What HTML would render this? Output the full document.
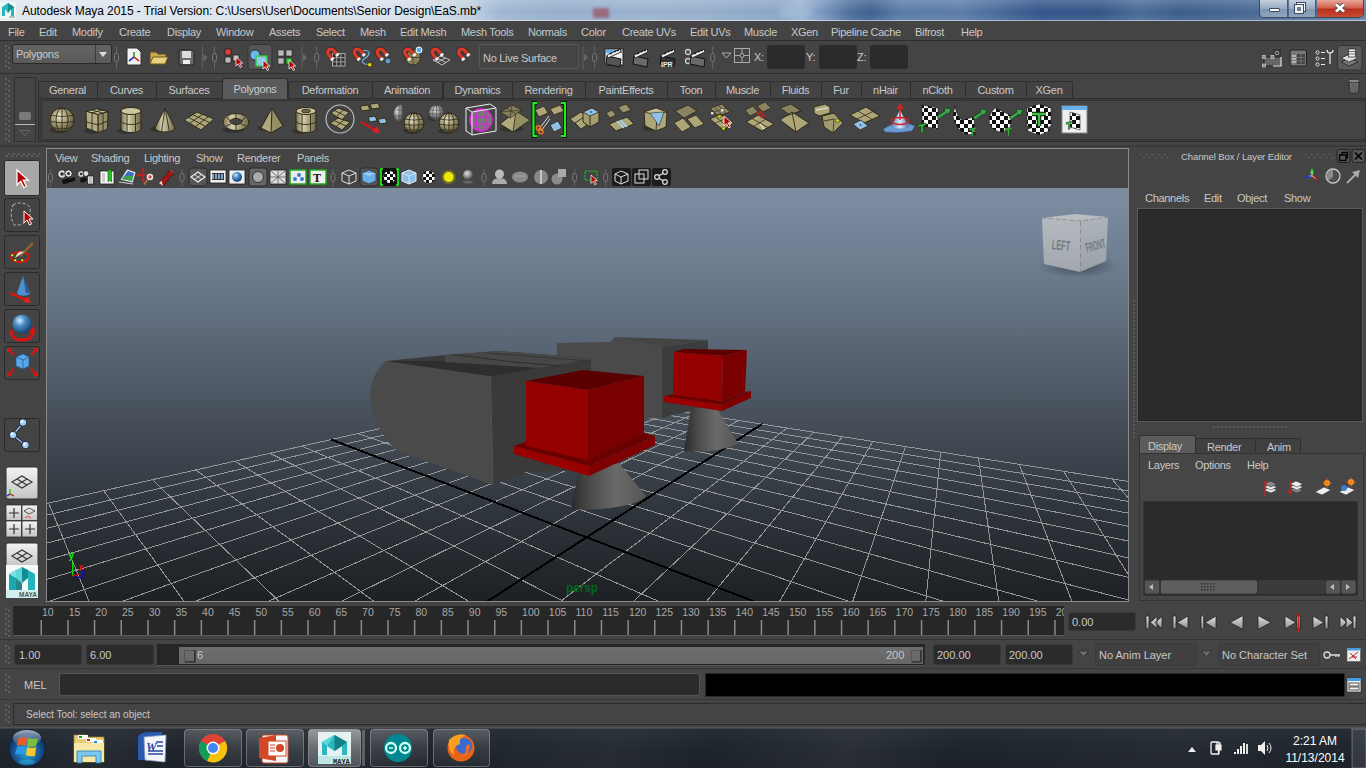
<!DOCTYPE html><html><head><meta charset="utf-8"><style>
*{margin:0;padding:0;box-sizing:border-box}
html,body{width:1366px;height:768px;overflow:hidden;background:#444;font-family:"Liberation Sans",sans-serif;font-size:10.5px;color:#c8c8c8}
.t{position:absolute;white-space:pre;line-height:12px;letter-spacing:-0.3px}
.a{position:absolute}
</style></head><body>
<div class="a" style="left:0;top:0;width:1366px;height:21px;background:linear-gradient(90deg,#dfe7ee 0px,#d8e2eb 380px,#d2dde8 430px,#c0d0e0 470px,#9fb7d3 500px,#95aecc 560px,#9ab2cf 650px,#94adcb 720px,#8aa5c4 780px,#98b2cf 800px,#7d9ac0 820px,#4d6f9c 850px,#3f6190 870px,#5a7ba6 900px,#5c7ca7 960px,#48699a 1000px,#33558a 1040px,#355688 1100px,#4a6b96 1140px,#3c5d8a 1180px,#4a6a94 1260px,#6282aa 1366px)"></div>
<div class="a" style="left:0;top:0;width:1366px;height:20px;background:linear-gradient(180deg,rgba(255,255,255,0.18),rgba(255,255,255,0) 60%,rgba(255,255,255,0.08))"></div>
<div class="a" style="left:0;top:20px;width:1366px;height:1px;background:rgba(255,255,255,0.55)"></div>
<div class="a" style="left:593px;top:8px;width:16px;height:10px;background:#9a5a6a;filter:blur(1.5px);opacity:0.8"></div>
<div class="a" style="left:780px;top:6px;width:30px;height:11px;background:#a8c0da;filter:blur(3px);opacity:0.7"></div>
<svg class="a" style="left:0;top:2px" width="16" height="17"><rect x="0" y="0" width="16" height="17" fill="#eef6f6"/><path d="M2,14 L2,5 L8,1 L14,5 L14,14 L11,14 L11,7 L8,11 L5,7 L5,14 Z" fill="#2ab5bc"/><path d="M8,1 L8,11 L11,7 L14,5 Z" fill="#178a92"/><rect x="9" y="14" width="6" height="2" fill="#bbb"/></svg>
<div class="t" style="left:22px;top:4px;font-size:12px;color:#000;line-height:14px;letter-spacing:-0.07px">Autodesk Maya 2015 - Trial Version: C:\Users\User\Documents\Senior Design\EaS.mb*</div>
<div class="a" style="left:1259px;top:0;width:105px;height:18px;border:1px solid #3c4a5c;border-top:none;border-radius:0 0 5px 5px;background:rgba(0,0,0,0.1)"></div>
<div style="position:absolute;left:1260px;top:0px;width:28px;height:17px;background:linear-gradient(#c4d0de,#97aac0 50%,#7e95b0 51%,#8fa6c0);border-right:1px solid #4a5a70;border-radius:0 0 0 4px"></div>
<div style="position:absolute;left:1269px;top:8px;width:11px;height:4px;background:#fff;border:1px solid #3a4a5e;border-radius:1px"></div>
<div style="position:absolute;left:1289px;top:0px;width:27px;height:17px;background:linear-gradient(#c4d0de,#97aac0 50%,#7e95b0 51%,#8fa6c0);border-right:1px solid #4a5a70"></div>
<div style="position:absolute;left:1297px;top:3px;width:8px;height:8px;border:2px solid #fff;box-shadow:0 0 0 1px #3a4a5e"></div>
<div style="position:absolute;left:1295px;top:5px;width:8px;height:8px;border:2.5px solid #f4f4f4;background:#6a8098;box-shadow:0 0 0 1px #3a4a5e"></div>
<div style="position:absolute;left:1317px;top:0px;width:46px;height:17px;background:linear-gradient(#e8a898,#d06050 45%,#b83020 55%,#c84a30);border-radius:0 0 4px 0"></div>
<svg class="a" style="left:1317px;top:0" width="46" height="17"><path d="M19,4.5 L27,11.5 M27,4.5 L19,11.5" stroke="#4a4a4a" stroke-width="4.6"/><path d="M19,4.5 L27,11.5 M27,4.5 L19,11.5" stroke="#fff" stroke-width="2.8"/></svg>
<div style="position:absolute;left:0px;top:21px;width:1366px;height:20px;background:#444;border-bottom:1px solid #2e2e2e"></div>
<div class="t" style="left:8px;top:26px;font-size:11px">File</div>
<div class="t" style="left:39px;top:26px;font-size:11px">Edit</div>
<div class="t" style="left:72px;top:26px;font-size:11px">Modify</div>
<div class="t" style="left:119px;top:26px;font-size:11px">Create</div>
<div class="t" style="left:167px;top:26px;font-size:11px">Display</div>
<div class="t" style="left:216px;top:26px;font-size:11px">Window</div>
<div class="t" style="left:269px;top:26px;font-size:11px">Assets</div>
<div class="t" style="left:316px;top:26px;font-size:11px">Select</div>
<div class="t" style="left:360px;top:26px;font-size:11px">Mesh</div>
<div class="t" style="left:400px;top:26px;font-size:11px">Edit Mesh</div>
<div class="t" style="left:461px;top:26px;font-size:11px">Mesh Tools</div>
<div class="t" style="left:528px;top:26px;font-size:11px">Normals</div>
<div class="t" style="left:581px;top:26px;font-size:11px">Color</div>
<div class="t" style="left:622px;top:26px;font-size:11px">Create UVs</div>
<div class="t" style="left:690px;top:26px;font-size:11px">Edit UVs</div>
<div class="t" style="left:744px;top:26px;font-size:11px">Muscle</div>
<div class="t" style="left:791px;top:26px;font-size:11px">XGen</div>
<div class="t" style="left:831px;top:26px;font-size:11px">Pipeline Cache</div>
<div class="t" style="left:915px;top:26px;font-size:11px">Bifrost</div>
<div class="t" style="left:961px;top:26px;font-size:11px">Help</div>
<div style="position:absolute;left:0px;top:41px;width:1366px;height:33px;background:#444;border-bottom:1px solid #2e2e2e"></div>
<div style="position:absolute;left:12px;top:44px;width:100px;height:20px;background:linear-gradient(#636363,#5a5a5a);border:1px solid #2a2a2a;border-radius:3px"></div>
<div class="t" style="left:16px;top:48px;font-size:11px">Polygons</div>
<div style="position:absolute;left:95px;top:45px;width:1px;height:18px;background:#3c3c3c"></div>
<div class="a" style="left:99px;top:52px;width:0;height:0;border-left:4px solid transparent;border-right:4px solid transparent;border-top:5px solid #ddd"></div>
<div style="position:absolute;left:479px;top:44px;width:100px;height:25px;background:#444;border:1px solid #585858;border-radius:3px"></div>
<div class="t" style="left:483px;top:52px;font-size:11px">No Live Surface</div>
<div class="t" style="left:754px;top:51px;font-size:11px">X:</div>
<div style="position:absolute;left:767px;top:45px;width:38px;height:24px;background:#2b2b2b;border-radius:3px"></div>
<div class="t" style="left:806px;top:51px;font-size:11px">Y:</div>
<div style="position:absolute;left:819px;top:45px;width:38px;height:24px;background:#2b2b2b;border-radius:3px"></div>
<div class="t" style="left:857px;top:51px;font-size:11px">Z:</div>
<div style="position:absolute;left:870px;top:45px;width:38px;height:24px;background:#2b2b2b;border-radius:3px"></div>
<div style="position:absolute;left:14px;top:77px;width:22px;height:65px;border:1px solid #2f2f2f;background:#444"></div>
<div style="position:absolute;left:19px;top:112px;width:12px;height:8px;background:#7a7a7a;border-radius:2px"></div>
<div style="position:absolute;left:15px;top:124px;width:20px;height:1px;background:#bbb"></div>
<div class="a" style="left:19px;top:130px;width:0;height:0;border-left:6px solid transparent;border-right:6px solid transparent;border-top:6px solid #666"></div>
<div class="a" style="left:21px;top:131px;width:0;height:0;border-left:4px solid transparent;border-right:4px solid transparent;border-top:4px solid #444"></div>
<div style="position:absolute;left:38px;top:98px;width:1328px;height:44px;background:#3c3c3c;border:1px solid #2e2e2e;border-right:none"></div>
<div style="position:absolute;left:41px;top:100px;width:1325px;height:40px;background:#444;border:1px solid #333;border-radius:2px"></div>
<div style="position:absolute;left:38px;top:81px;width:60px;height:17px;background:#434343;border:1px solid #2e2e2e;border-bottom:none;border-radius:2px 2px 0 0"></div>
<div class="t" style="left:38px;top:84px;width:59px;text-align:center;font-size:11px">General</div>
<div style="position:absolute;left:97px;top:81px;width:60px;height:17px;background:#434343;border:1px solid #2e2e2e;border-bottom:none;border-radius:2px 2px 0 0"></div>
<div class="t" style="left:97px;top:84px;width:59px;text-align:center;font-size:11px">Curves</div>
<div style="position:absolute;left:156px;top:81px;width:67px;height:17px;background:#434343;border:1px solid #2e2e2e;border-bottom:none;border-radius:2px 2px 0 0"></div>
<div class="t" style="left:156px;top:84px;width:66px;text-align:center;font-size:11px">Surfaces</div>
<div style="position:absolute;left:222px;top:78px;width:66px;height:21px;background:#5a5a5a;border:1px solid #2e2e2e;border-bottom:none;border-radius:3px 3px 0 0"></div>
<div class="t" style="left:222px;top:83px;width:66px;text-align:center;font-size:11px;color:#ccc">Polygons</div>
<div style="position:absolute;left:288px;top:81px;width:85px;height:17px;background:#434343;border:1px solid #2e2e2e;border-bottom:none;border-radius:2px 2px 0 0"></div>
<div class="t" style="left:288px;top:84px;width:84px;text-align:center;font-size:11px">Deformation</div>
<div style="position:absolute;left:372px;top:81px;width:71px;height:17px;background:#434343;border:1px solid #2e2e2e;border-bottom:none;border-radius:2px 2px 0 0"></div>
<div class="t" style="left:372px;top:84px;width:70px;text-align:center;font-size:11px">Animation</div>
<div style="position:absolute;left:443px;top:81px;width:70px;height:17px;background:#434343;border:1px solid #2e2e2e;border-bottom:none;border-radius:2px 2px 0 0"></div>
<div class="t" style="left:443px;top:84px;width:69px;text-align:center;font-size:11px">Dynamics</div>
<div style="position:absolute;left:512px;top:81px;width:74px;height:17px;background:#434343;border:1px solid #2e2e2e;border-bottom:none;border-radius:2px 2px 0 0"></div>
<div class="t" style="left:512px;top:84px;width:73px;text-align:center;font-size:11px">Rendering</div>
<div style="position:absolute;left:585px;top:81px;width:83px;height:17px;background:#434343;border:1px solid #2e2e2e;border-bottom:none;border-radius:2px 2px 0 0"></div>
<div class="t" style="left:585px;top:84px;width:82px;text-align:center;font-size:11px">PaintEffects</div>
<div style="position:absolute;left:667px;top:81px;width:49px;height:17px;background:#434343;border:1px solid #2e2e2e;border-bottom:none;border-radius:2px 2px 0 0"></div>
<div class="t" style="left:667px;top:84px;width:48px;text-align:center;font-size:11px">Toon</div>
<div style="position:absolute;left:715px;top:81px;width:56px;height:17px;background:#434343;border:1px solid #2e2e2e;border-bottom:none;border-radius:2px 2px 0 0"></div>
<div class="t" style="left:715px;top:84px;width:55px;text-align:center;font-size:11px">Muscle</div>
<div style="position:absolute;left:770px;top:81px;width:52px;height:17px;background:#434343;border:1px solid #2e2e2e;border-bottom:none;border-radius:2px 2px 0 0"></div>
<div class="t" style="left:770px;top:84px;width:51px;text-align:center;font-size:11px">Fluids</div>
<div style="position:absolute;left:821px;top:81px;width:41px;height:17px;background:#434343;border:1px solid #2e2e2e;border-bottom:none;border-radius:2px 2px 0 0"></div>
<div class="t" style="left:821px;top:84px;width:40px;text-align:center;font-size:11px">Fur</div>
<div style="position:absolute;left:861px;top:81px;width:50px;height:17px;background:#434343;border:1px solid #2e2e2e;border-bottom:none;border-radius:2px 2px 0 0"></div>
<div class="t" style="left:861px;top:84px;width:49px;text-align:center;font-size:11px">nHair</div>
<div style="position:absolute;left:910px;top:81px;width:56px;height:17px;background:#434343;border:1px solid #2e2e2e;border-bottom:none;border-radius:2px 2px 0 0"></div>
<div class="t" style="left:910px;top:84px;width:55px;text-align:center;font-size:11px">nCloth</div>
<div style="position:absolute;left:965px;top:81px;width:62px;height:17px;background:#434343;border:1px solid #2e2e2e;border-bottom:none;border-radius:2px 2px 0 0"></div>
<div class="t" style="left:965px;top:84px;width:61px;text-align:center;font-size:11px">Custom</div>
<div style="position:absolute;left:1026px;top:81px;width:47px;height:17px;background:#434343;border:1px solid #2e2e2e;border-bottom:none;border-radius:2px 2px 0 0"></div>
<div class="t" style="left:1026px;top:84px;width:46px;text-align:center;font-size:11px">XGen</div>
<div style="position:absolute;left:0px;top:145px;width:1366px;height:2px;background:#393939"></div>
<div style="position:absolute;left:46px;top:148px;width:1083px;height:454px;background:#444;border:1px solid #8a8a8a"></div>
<div class="t" style="left:55px;top:152px;font-size:11px">View</div>
<div class="t" style="left:91px;top:152px;font-size:11px">Shading</div>
<div class="t" style="left:144px;top:152px;font-size:11px">Lighting</div>
<div class="t" style="left:196px;top:152px;font-size:11px">Show</div>
<div class="t" style="left:237px;top:152px;font-size:11px">Renderer</div>
<div class="t" style="left:297px;top:152px;font-size:11px">Panels</div>
<div class="a" style="left:47px;top:188px;width:1081px;height:413px;background:linear-gradient(180deg,#7d8ea3 0%,#6e7d90 18%,#5a6675 38%,#444d57 58%,#2f353c 78%,#1d2024 100%);overflow:hidden">
<svg width="1081" height="413" style="position:absolute;left:0;top:0"><g transform="translate(-47,-188)"><line x1="548.5" y1="390.7" x2="-384.2" y2="600.3" stroke="#969696" stroke-width="1" shape-rendering="crispEdges"/><line x1="548.5" y1="390.7" x2="1222.1" y2="496.1" stroke="#969696" stroke-width="1" shape-rendering="crispEdges"/><line x1="561.8" y1="392.7" x2="-411.8" y2="624.2" stroke="#969696" stroke-width="1" shape-rendering="crispEdges"/><line x1="536.3" y1="393.4" x2="1239.8" y2="509.3" stroke="#969696" stroke-width="1" shape-rendering="crispEdges"/><line x1="575.8" y1="394.9" x2="-444.2" y2="652.1" stroke="#969696" stroke-width="1" shape-rendering="crispEdges"/><line x1="523.4" y1="396.3" x2="1260.1" y2="524.3" stroke="#969696" stroke-width="1" shape-rendering="crispEdges"/><line x1="590.4" y1="397.2" x2="-482.7" y2="685.3" stroke="#969696" stroke-width="1" shape-rendering="crispEdges"/><line x1="509.7" y1="399.4" x2="1283.5" y2="541.6" stroke="#969696" stroke-width="1" shape-rendering="crispEdges"/><line x1="605.7" y1="399.6" x2="-529.2" y2="725.5" stroke="#969696" stroke-width="1" shape-rendering="crispEdges"/><line x1="495.0" y1="402.7" x2="1310.8" y2="561.8" stroke="#969696" stroke-width="1" shape-rendering="crispEdges"/><line x1="621.8" y1="402.1" x2="-586.5" y2="774.9" stroke="#969696" stroke-width="1" shape-rendering="crispEdges"/><line x1="479.4" y1="406.2" x2="1343.0" y2="585.6" stroke="#969696" stroke-width="1" shape-rendering="crispEdges"/><line x1="638.8" y1="404.8" x2="-658.8" y2="837.4" stroke="#969696" stroke-width="1" shape-rendering="crispEdges"/><line x1="462.7" y1="409.9" x2="1381.7" y2="614.2" stroke="#969696" stroke-width="1" shape-rendering="crispEdges"/><line x1="656.6" y1="407.6" x2="-753.0" y2="918.7" stroke="#969696" stroke-width="1" shape-rendering="crispEdges"/><line x1="444.7" y1="414.0" x2="1429.0" y2="649.2" stroke="#969696" stroke-width="1" shape-rendering="crispEdges"/><line x1="675.4" y1="410.5" x2="-880.7" y2="1028.9" stroke="#969696" stroke-width="1" shape-rendering="crispEdges"/><line x1="425.4" y1="418.3" x2="1488.0" y2="692.9" stroke="#969696" stroke-width="1" shape-rendering="crispEdges"/><line x1="695.3" y1="413.6" x2="-1063.6" y2="1186.9" stroke="#969696" stroke-width="1" shape-rendering="crispEdges"/><line x1="404.6" y1="423.0" x2="1563.9" y2="749.1" stroke="#969696" stroke-width="1" shape-rendering="crispEdges"/><line x1="716.2" y1="416.9" x2="-1347.7" y2="1432.1" stroke="#969696" stroke-width="1" shape-rendering="crispEdges"/><line x1="382.1" y1="428.1" x2="1665.1" y2="823.9" stroke="#969696" stroke-width="1" shape-rendering="crispEdges"/><line x1="738.5" y1="420.4" x2="-1848.7" y2="1864.6" stroke="#969696" stroke-width="1" shape-rendering="crispEdges"/><line x1="357.7" y1="433.5" x2="1806.7" y2="928.7" stroke="#969696" stroke-width="1" shape-rendering="crispEdges"/><line x1="787.2" y1="428.0" x2="-7702.8" y2="6918.3" stroke="#969696" stroke-width="1" shape-rendering="crispEdges"/><line x1="302.0" y1="446.1" x2="2371.8" y2="1346.8" stroke="#969696" stroke-width="1" shape-rendering="crispEdges"/><line x1="813.9" y1="432.2" x2="-11746.4" y2="12210.5" stroke="#969696" stroke-width="1" shape-rendering="crispEdges"/><line x1="270.0" y1="453.2" x2="3075.9" y2="1867.8" stroke="#969696" stroke-width="1" shape-rendering="crispEdges"/><line x1="842.4" y1="436.7" x2="-8866.8" y2="12210.2" stroke="#969696" stroke-width="1" shape-rendering="crispEdges"/><line x1="234.8" y1="461.2" x2="5172.9" y2="3419.4" stroke="#969696" stroke-width="1" shape-rendering="crispEdges"/><line x1="872.8" y1="441.4" x2="-5987.2" y2="12209.8" stroke="#969696" stroke-width="1" shape-rendering="crispEdges"/><line x1="195.8" y1="469.9" x2="16099.6" y2="12207.1" stroke="#969696" stroke-width="1" shape-rendering="crispEdges"/><line x1="905.5" y1="446.6" x2="-3107.6" y2="12209.5" stroke="#969696" stroke-width="1" shape-rendering="crispEdges"/><line x1="152.4" y1="479.7" x2="12357.9" y2="12207.6" stroke="#969696" stroke-width="1" shape-rendering="crispEdges"/><line x1="940.6" y1="452.1" x2="-228.0" y2="12209.1" stroke="#969696" stroke-width="1" shape-rendering="crispEdges"/><line x1="103.6" y1="490.6" x2="8616.3" y2="12208.0" stroke="#969696" stroke-width="1" shape-rendering="crispEdges"/><line x1="978.4" y1="458.0" x2="2651.6" y2="12208.8" stroke="#969696" stroke-width="1" shape-rendering="crispEdges"/><line x1="48.6" y1="503.0" x2="4874.7" y2="12208.5" stroke="#969696" stroke-width="1" shape-rendering="crispEdges"/><line x1="1019.3" y1="464.4" x2="5531.2" y2="12208.4" stroke="#969696" stroke-width="1" shape-rendering="crispEdges"/><line x1="-14.1" y1="517.1" x2="1133.1" y2="12208.9" stroke="#969696" stroke-width="1" shape-rendering="crispEdges"/><line x1="1063.6" y1="471.3" x2="8410.7" y2="12208.1" stroke="#969696" stroke-width="1" shape-rendering="crispEdges"/><line x1="-86.0" y1="533.3" x2="-2608.5" y2="12209.4" stroke="#969696" stroke-width="1" shape-rendering="crispEdges"/><line x1="1111.8" y1="478.9" x2="11290.3" y2="12207.7" stroke="#969696" stroke-width="1" shape-rendering="crispEdges"/><line x1="-169.5" y1="552.0" x2="-6350.1" y2="12209.9" stroke="#969696" stroke-width="1" shape-rendering="crispEdges"/><line x1="1164.4" y1="487.1" x2="14169.9" y2="12207.3" stroke="#969696" stroke-width="1" shape-rendering="crispEdges"/><line x1="-267.5" y1="574.1" x2="-10091.7" y2="12210.3" stroke="#969696" stroke-width="1" shape-rendering="crispEdges"/><line x1="1222.1" y1="496.1" x2="17049.5" y2="12207.0" stroke="#969696" stroke-width="1" shape-rendering="crispEdges"/><line x1="-384.2" y1="600.3" x2="-13833.4" y2="12210.8" stroke="#969696" stroke-width="1" shape-rendering="crispEdges"/><line x1="762.1" y1="424.1" x2="-2968.3" y2="2831.1" stroke="#000" stroke-width="2" shape-rendering="crispEdges"/><line x1="331.1" y1="439.5" x2="2018.8" y2="1085.6" stroke="#000" stroke-width="2" shape-rendering="crispEdges"/><defs>
<linearGradient id="cone" x1="0" x2="1" y1="0" y2="0"><stop offset="0" stop-color="#2a2a2a"/><stop offset="0.25" stop-color="#4a4a4a"/><stop offset="0.6" stop-color="#6a6a6a"/><stop offset="1" stop-color="#555"/></linearGradient>
<radialGradient id="vcs" cx="0.5" cy="0.5" r="0.5"><stop offset="0" stop-color="#2c3846" stop-opacity="0.7"/><stop offset="1" stop-color="#2c3846" stop-opacity="0"/></radialGradient>
<linearGradient id="vcl" x1="0" x2="0" y1="0" y2="1"><stop offset="0" stop-color="#b4b9bf"/><stop offset="1" stop-color="#a2a8ae"/></linearGradient>
<linearGradient id="vcr" x1="0" x2="0" y1="0" y2="1"><stop offset="0" stop-color="#adb3b9"/><stop offset="1" stop-color="#9aa1a8"/></linearGradient>
</defs><polygon points="557,343 610,342 615,337 662,347 662,418 597,421 557,421" fill="#4a4a4a" /><polygon points="662,347 708,340 708,406 662,418" fill="#3c3c3c" /><polygon points="615,337 708,340 662,347" fill="#444" /><polygon points="386,361 445,355 486,352 497,351 591,358 591,470 526,472 493,485 397,451" fill="#3a3a3a" /><path d="M386,361 L490,376 L493,485 L397,451 C385,440 372,420 370,398 C370,385 374,372 386,361 Z" fill="#4a4a4a"/><polygon points="490,376 591,360 591,470 526,472 493,485" fill="#3a3a3a" /><polygon points="386,361 445,361 541,368 591,359 490,376" fill="#2e2e2e" /><polygon points="445,355 486,352 497,351 591,358 591,359 541,368 445,362" fill="#474747" /><line x1="490.5" y1="376" x2="493" y2="485" stroke="#555" stroke-width="1"/><polyline points="453,354.6 482,358 510,361.7 545,364.6 560,366" fill="none" stroke="#2e2e2e" stroke-width="1"/><polyline points="486,353 540,357 590,361" fill="none" stroke="#353535" stroke-width="1"/><path d="M578,474 L619,463 L646,496 C640,505 600,512 571,509 Z" fill="url(#cone)"/><polygon points="514,446 526,442 588,457 644,433 655,436 589,466" fill="#6a0000" /><polygon points="514,446 589,466 589,476 514,454" fill="#9a0000" /><polygon points="589,466 655,436 655,445 589,476" fill="#7e0000" /><polygon points="526,381 583,370 644,376 588,390" fill="#5a0000" /><polygon points="526,381 588,390 588,460 526,446" fill="#950000" /><polygon points="588,390 644,376 644,433 588,460" fill="#780000" /><path d="M691,408 L716,407 L738,443 C730,450 700,453 684,451 Z" fill="url(#cone)"/><polygon points="664,396 674,394 722,401 745,392 751,391 722,405" fill="#6a0000" /><polygon points="664,396 722,405 722,411 664,402" fill="#9a0000" /><polygon points="722,405 751,391 751,398 722,411" fill="#7e0000" /><polygon points="674,352 683,349 747,350 723,356" fill="#5a0000" /><polygon points="674,352 723,356 722,401 673,395" fill="#950000" /><polygon points="723,356 747,350 745,392 722,401" fill="#780000" /><ellipse cx="1078" cy="266" rx="40" ry="12" fill="url(#vcs)"/><polygon points="1042,218 1080,221 1080,272 1044,264" fill="url(#vcl)" /><polygon points="1080,221 1108,217 1106,261 1080,272" fill="url(#vcr)" /><polygon points="1042,218 1075,214 1108,217 1080,221" fill="#b8bdc2" /><line x1="1080.5" y1="221" x2="1080.5" y2="272" stroke="#8a8580" stroke-width="0.8" stroke-dasharray="5,3"/><polyline points="1042,218 1080,221 1108,217" fill="none" stroke="#8a8580" stroke-width="0.8" stroke-dasharray="4,3"/><text x="1052" y="250" font-family="Liberation Sans" font-size="14" font-weight="bold" fill="#737a82" textLength="18" lengthAdjust="spacingAndGlyphs" transform="rotate(5 1061 245)">LEFT</text><text x="1085" y="251" font-family="Liberation Sans" font-size="13" font-weight="bold" fill="#737a82" textLength="20" lengthAdjust="spacingAndGlyphs" transform="translate(0,-1) rotate(-14 1095 245)">FRONT</text><rect x="72" y="562" width="1.2" height="14" fill="#00e000"/><path d="M72,576 L76,575 L80,574" stroke="#f00" stroke-width="1.2" fill="none"/><path d="M75,577 L84,578" stroke="#00f" stroke-width="1.2" fill="none"/><text x="68.5" y="559" font-family="Liberation Sans" font-size="10" font-weight="bold" fill="#00f000">y</text><text x="78.5" y="570" font-family="Liberation Sans" font-size="8.5" font-weight="bold" fill="#f00">x</text><text x="81" y="575" font-family="Liberation Sans" font-size="8" font-weight="bold" fill="#00f">z</text><text x="566" y="592" font-family="Liberation Sans" font-size="12" font-weight="bold" fill="#00661a" textLength="32" lengthAdjust="spacingAndGlyphs">persp</text></g></svg>
</div>
<div style="position:absolute;left:1133px;top:147px;width:233px;height:456px;background:#444"></div>
<div class="t" style="left:1181px;top:151px;font-size:9.5px;letter-spacing:-0.1px">Channel Box / Layer Editor</div>
<div class="t" style="left:1145px;top:192px;font-size:11px">Channels</div>
<div class="t" style="left:1204px;top:192px;font-size:11px">Edit</div>
<div class="t" style="left:1237px;top:192px;font-size:11px">Object</div>
<div class="t" style="left:1284px;top:192px;font-size:11px">Show</div>
<div style="position:absolute;left:1137px;top:208px;width:226px;height:214px;background:#2b2b2b;border:1px solid #5a5a5a;box-shadow:inset 0 0 0 1px #222"></div>
<div style="position:absolute;left:1139px;top:435px;width:57px;height:19px;background:#5c5c5c;border:1px solid #333;border-bottom:none;border-radius:3px 3px 0 0"></div>
<div class="t" style="left:1148px;top:440px;font-size:11px">Display</div>
<div style="position:absolute;left:1195px;top:438px;width:61px;height:16px;background:#404040;border:1px solid #2e2e2e;border-bottom:none;border-radius:3px 3px 0 0"></div>
<div class="t" style="left:1207px;top:441px;font-size:11px">Render</div>
<div style="position:absolute;left:1255px;top:438px;width:46px;height:16px;background:#404040;border:1px solid #2e2e2e;border-bottom:none;border-radius:3px 3px 0 0"></div>
<div class="t" style="left:1267px;top:441px;font-size:11px">Anim</div>
<div style="position:absolute;left:1139px;top:453px;width:225px;height:148px;background:#464646;border:1px solid #333"></div>
<div class="t" style="left:1148px;top:459px;font-size:11px">Layers</div>
<div class="t" style="left:1195px;top:459px;font-size:11px">Options</div>
<div class="t" style="left:1247px;top:459px;font-size:11px">Help</div>
<div style="position:absolute;left:1143px;top:501px;width:215px;height:95px;background:#2b2b2b;border:1px solid #333;border-radius:2px"></div>
<div style="position:absolute;left:0px;top:603px;width:1366px;height:37px;background:#444;border-bottom:1px solid #333"></div>
<div style="position:absolute;left:13px;top:606px;width:1051px;height:30px;background:#272727;border-bottom:1px solid #5a5a5a"></div>
<div style="position:absolute;left:1068px;top:612px;width:68px;height:19px;background:#2b2b2b;border:1px solid #393939;border-radius:3px"></div>
<div class="t" style="left:1072px;top:616px;font-size:11px;letter-spacing:0">0.00</div>
<div style="position:absolute;left:0px;top:641px;width:1366px;height:28px;background:#444;border-bottom:1px solid #383838"></div>
<div style="position:absolute;left:14px;top:644px;width:68px;height:21px;background:#2b2b2b;border:1px solid #383838;border-radius:3px"></div>
<div class="t" style="left:19px;top:649px;font-size:11px;letter-spacing:0">1.00</div>
<div style="position:absolute;left:86px;top:644px;width:68px;height:21px;background:#2b2b2b;border:1px solid #383838;border-radius:3px"></div>
<div class="t" style="left:90px;top:649px;font-size:11px;letter-spacing:0">6.00</div>
<div style="position:absolute;left:157px;top:644px;width:768px;height:22px;background:#262626;border-bottom:1px solid #555"></div>
<div style="position:absolute;left:179px;top:647px;width:744px;height:18px;background:linear-gradient(#6e6e6e,#666);border-bottom:1px solid #222"></div>
<div class="t" style="left:197px;top:649px;font-size:11px;letter-spacing:0">6</div>
<div class="t" style="left:886px;top:649px;font-size:11px;letter-spacing:0">200</div>
<div style="position:absolute;left:933px;top:644px;width:68px;height:21px;background:#2b2b2b;border:1px solid #383838;border-radius:3px"></div>
<div class="t" style="left:937px;top:649px;font-size:11px;letter-spacing:0">200.00</div>
<div style="position:absolute;left:1005px;top:644px;width:68px;height:21px;background:#2b2b2b;border:1px solid #383838;border-radius:3px"></div>
<div class="t" style="left:1009px;top:649px;font-size:11px;letter-spacing:0">200.00</div>
<div style="position:absolute;left:1095px;top:643px;width:102px;height:23px;background:#404040;border:1px solid #3a3a3a;border-radius:3px"></div>
<div class="t" style="left:1099px;top:649px;font-size:11px;letter-spacing:0">No Anim Layer</div>
<div style="position:absolute;left:1218px;top:643px;width:102px;height:23px;background:#404040;border:1px solid #3a3a3a;border-radius:3px"></div>
<div class="t" style="left:1222px;top:649px;font-size:11px;letter-spacing:0">No Character Set</div>
<div style="position:absolute;left:0px;top:669px;width:1366px;height:31px;background:#444;border-bottom:1px solid #383838"></div>
<div class="t" style="left:24px;top:679px;font-size:11px;letter-spacing:0">MEL</div>
<div style="position:absolute;left:59px;top:673px;width:641px;height:23px;background:#2b2b2b;border:1px solid #555;border-radius:3px"></div>
<div style="position:absolute;left:705px;top:673px;width:640px;height:24px;background:#000;border:1px solid #2a2a2a"></div>
<div style="position:absolute;left:0px;top:700px;width:1366px;height:27px;background:#444"></div>
<div style="position:absolute;left:13px;top:703px;width:1353px;height:22px;background:#444;border:1px solid #2c2c2c;border-right:none"></div>
<div class="t" style="left:26px;top:709px;font-size:10px;letter-spacing:0">Select Tool: select an object</div>
<div class="a" style="left:0;top:727px;width:1366px;height:41px;background:linear-gradient(180deg,#50555a 0px,#50555a 1px,#262c33 2px,#1f252c 50%,#1b2027 100%)"></div>
<div class="a" style="left:0;top:728px;width:1366px;height:40px;background:linear-gradient(115deg,rgba(255,255,255,0) 0%,rgba(255,255,255,0.04) 8%,rgba(255,255,255,0) 14%,rgba(255,255,255,0.05) 25%,rgba(255,255,255,0) 32%,rgba(255,255,255,0.04) 45%,rgba(255,255,255,0) 52%,rgba(255,255,255,0.05) 62%,rgba(255,255,255,0) 70%,rgba(255,255,255,0.03) 85%,rgba(255,255,255,0) 100%)"></div>
<svg width="1366" height="768" style="position:absolute;left:0;top:0"><defs>
<radialGradient id="tsph" cx="0.4" cy="0.35" r="0.65"><stop offset="0" stop-color="#f0ecd8"/><stop offset="0.35" stop-color="#b8b088"/><stop offset="1" stop-color="#5e5838"/></radialGradient>
<linearGradient id="tcyl" x1="0" x2="1"><stop offset="0" stop-color="#7a7250"/><stop offset="0.35" stop-color="#d6d0ac"/><stop offset="1" stop-color="#6e6646"/></linearGradient>
<radialGradient id="bsph" cx="0.38" cy="0.32" r="0.7"><stop offset="0" stop-color="#d8ecff"/><stop offset="0.4" stop-color="#4d8ec8"/><stop offset="1" stop-color="#14406e"/></radialGradient>
<radialGradient id="gsph" cx="0.4" cy="0.35" r="0.7"><stop offset="0" stop-color="#e0e0e0"/><stop offset="0.5" stop-color="#909090"/><stop offset="1" stop-color="#3a3a3a"/></radialGradient>
<linearGradient id="btnw" x1="0" x2="0" y1="0" y2="1"><stop offset="0" stop-color="#f4f4f4"/><stop offset="1" stop-color="#c4c4c4"/></linearGradient>
<linearGradient id="pb" x1="0" x2="0" y1="0" y2="1"><stop offset="0" stop-color="#e4e4e4"/><stop offset="1" stop-color="#8a8a8a"/></linearGradient>
<linearGradient id="mayal" x1="0" x2="0" y1="0" y2="1"><stop offset="0" stop-color="#9ee8ea"/><stop offset="1" stop-color="#1aa5aa"/></linearGradient>
<pattern id="chk" width="8" height="8" patternUnits="userSpaceOnUse"><rect width="8" height="8" fill="#fff"/><rect width="4" height="4" fill="#111"/><rect x="4" y="4" width="4" height="4" fill="#111"/></pattern>
<pattern id="chk6" width="6" height="6" patternUnits="userSpaceOnUse"><rect width="6" height="6" fill="#fff"/><rect width="3" height="3" fill="#111"/><rect x="3" y="3" width="3" height="3" fill="#111"/></pattern>
</defs><ellipse cx="59" cy="130" rx="9.600000000000001" ry="3" fill="#000" opacity="0.25"/><circle cx="62" cy="120" r="12" fill="url(#tsph)" stroke="#2e2a18" stroke-width="1"/><ellipse cx="62" cy="120" rx="6.0" ry="12" fill="none" stroke="#2e2a18" stroke-width="0.9"/><line x1="62" y1="108" x2="62" y2="132" stroke="#2e2a18" stroke-width="0.9"/><path d="M50.96,115.44 Q62,117.6 73.04,115.44 M50,121.44 Q62,124.2 74,121.44 M53.0,127.8 Q62,130.2 71.0,127.8" fill="none" stroke="#2e2a18" stroke-width="0.8"/><ellipse cx="92" cy="130.9" rx="8" ry="3" fill="#000" opacity="0.25"/><path d="M86,111.1 L98.1,114.4 L98.1,132.55 L86.55,128.15 Z" fill="#b3ab82" stroke="#2e2a18" stroke-width="1"/><path d="M98.1,114.4 L108,111.65 L107.45,129.25 L98.1,132.55 Z" fill="#958d65" stroke="#2e2a18" stroke-width="1"/><path d="M86,111.1 L96.45,108.9 L108,111.65 L98.1,114.4 Z" fill="#cfc8a2" stroke="#2e2a18" stroke-width="1"/><path d="M92.05,112.75 L92.05,130.35 M86.33,122.1 L98.1,124.85 L107.67,121 M103.05,113.08 L103.05,130.9 M91.5,110.0 L103.05,113.08 M101.95,110.33 L92.05,112.75" stroke="#2e2a18" stroke-width="0.9" fill="none"/><ellipse cx="125" cy="131" rx="8" ry="3" fill="#000" opacity="0.25"/><path d="M121,111 L121,129 A10,3.5 0 0 0 141,129 L141,111 Z" fill="url(#tcyl)" stroke="#2e2a18" stroke-width="1"/><ellipse cx="131" cy="111" rx="10" ry="3.5" fill="#cdc6a0" stroke="#2e2a18" stroke-width="1"/><path d="M121,121 A10,3.5 0 0 0 141,121 M127.0,114 L127.0,131.5 M135.5,114 L135.5,131.5" stroke="#2e2a18" fill="none" stroke-width="0.9"/><ellipse cx="158" cy="129" rx="8" ry="3" fill="#000" opacity="0.25"/><path d="M165,108 L155,128 A10,4 0 0 0 175,128 Z" fill="url(#tcyl)" stroke="#2e2a18" stroke-width="1"/><path d="M165,108 L161.5,132 M165,108 L169.5,132" stroke="#2e2a18" stroke-width="0.9"/><polygon points="184,120 197,112 214,119 201,130" fill="#aea679" stroke="#2e2a18" stroke-width="1"/><line x1="188.3" y1="117.3" x2="205.3" y2="126.3" stroke="#2e2a18" stroke-width="0.9"/><line x1="189.7" y1="123.3" x2="202.7" y2="114.3" stroke="#2e2a18" stroke-width="0.9"/><line x1="192.7" y1="114.7" x2="209.7" y2="122.7" stroke="#2e2a18" stroke-width="0.9"/><line x1="195.3" y1="126.7" x2="208.3" y2="116.7" stroke="#2e2a18" stroke-width="0.9"/><ellipse cx="233" cy="130" rx="11" ry="3" fill="#000" opacity="0.25"/><ellipse cx="236" cy="122" rx="13" ry="8.5" fill="url(#tcyl)" stroke="#2e2a18" stroke-width="1"/><ellipse cx="236" cy="121.5" rx="6" ry="3" fill="#444" stroke="#2e2a18" stroke-width="1"/><path d="M227,117 L230,121 M236,114 L236,118.5 M245,117 L242,121 M226,126 L231,124 M236,130 L236,124.5 M246,126 L241,124" stroke="#2e2a18" stroke-width="0.9"/><ellipse cx="265" cy="128" rx="8" ry="3" fill="#000" opacity="0.25"/><path d="M272,108 L261,128 L271,133 L283,126 Z" fill="#b1a97d" stroke="#2e2a18" stroke-width="1"/><path d="M272,108 L271,133 L283,126 Z" fill="#948c64" stroke="#2e2a18" stroke-width="1"/><ellipse cx="300" cy="131" rx="8" ry="3" fill="#000" opacity="0.25"/><path d="M296,111 L296,129 A10,3.5 0 0 0 316,129 L316,111 Z" fill="url(#tcyl)" stroke="#2e2a18" stroke-width="1"/><ellipse cx="306" cy="111" rx="10" ry="3.5" fill="#cdc6a0" stroke="#2e2a18" stroke-width="1"/><path d="M296,121 A10,3.5 0 0 0 316,121 M302.0,114 L302.0,131.5 M310.5,114 L310.5,131.5" stroke="#2e2a18" fill="none" stroke-width="0.9"/><ellipse cx="306" cy="111" rx="4.5" ry="1.8" fill="#6d6648" stroke="#2e2a18" stroke-width="0.8"/><circle cx="340" cy="119" r="14" fill="none" stroke="#bbb" stroke-width="1.2"/><polygon points="331,113 338,108 349,112 342,120" fill="#aea679" stroke="#2e2a18" stroke-width="1"/><line x1="334.5" y1="110.5" x2="345.5" y2="116.0" stroke="#2e2a18" stroke-width="0.9"/><line x1="336.5" y1="116.5" x2="343.5" y2="110.0" stroke="#2e2a18" stroke-width="0.9"/><polygon points="330,123 338,118 350,122 342,130" fill="#aea679" stroke="#2e2a18" stroke-width="1"/><line x1="334.0" y1="120.5" x2="346.0" y2="126.0" stroke="#2e2a18" stroke-width="0.9"/><line x1="336.0" y1="126.5" x2="344.0" y2="120.0" stroke="#2e2a18" stroke-width="0.9"/><polygon points="360,106.2 368.0,105 370,109.8 362.0,111" fill="#aea679" stroke="#2e2a18" stroke-width="1"/><polygon points="370,104.2 378.0,103 380,107.8 372.0,109" fill="#aea679" stroke="#2e2a18" stroke-width="1"/><polygon points="368,117.2 375.2,116 377,120.8 369.8,122" fill="#8ec0e8" stroke="#2e2a18" stroke-width="1"/><polygon points="378,119.2 385.2,118 387,122.8 379.8,124" fill="#8ec0e8" stroke="#2e2a18" stroke-width="1"/><line x1="361" y1="122" x2="377" y2="131" stroke="#d01818" stroke-width="2.5"/><polygon points="380,133 372,132 377,126" fill="#e02020"/><path d="M403,104 A9.5,9.5 0 0 0 403,123 Z" fill="url(#gsph)" stroke="#444" stroke-width="0.8"/><path d="M396,110 h7 M394,116 h9 M399,104.5 v18" stroke="#444" stroke-width="0.6"/><ellipse cx="411" cy="131" rx="8.0" ry="3" fill="#000" opacity="0.25"/><circle cx="414" cy="123" r="10" fill="url(#tsph)" stroke="#2e2a18" stroke-width="1"/><ellipse cx="414" cy="123" rx="5.0" ry="10" fill="none" stroke="#2e2a18" stroke-width="0.9"/><line x1="414" y1="113" x2="414" y2="133" stroke="#2e2a18" stroke-width="0.9"/><path d="M404.8,119.2 Q414,121.0 423.2,119.2 M404,124.2 Q414,126.5 424,124.2 M406.5,129.5 Q414,131.5 421.5,129.5" fill="none" stroke="#2e2a18" stroke-width="0.8"/><ellipse cx="433.5" cy="118.0" rx="6.0" ry="3" fill="#000" opacity="0.25"/><circle cx="436.5" cy="112.5" r="7.5" fill="url(#gsph)" stroke="#444" stroke-width="0.7"/><ellipse cx="436.5" cy="112.5" rx="3.75" ry="7.5" fill="none" stroke="#444" stroke-width="0.63"/><line x1="436.5" y1="105.0" x2="436.5" y2="120.0" stroke="#444" stroke-width="0.63"/><path d="M429.6,109.65 Q436.5,111.0 443.4,109.65 M429.0,113.4 Q436.5,115.125 444.0,113.4 M430.875,117.375 Q436.5,118.875 442.125,117.375" fill="none" stroke="#444" stroke-width="0.5599999999999999"/><ellipse cx="446" cy="131" rx="8.0" ry="3" fill="#000" opacity="0.25"/><circle cx="449" cy="123" r="10" fill="url(#tsph)" stroke="#2e2a18" stroke-width="1"/><ellipse cx="449" cy="123" rx="5.0" ry="10" fill="none" stroke="#2e2a18" stroke-width="0.9"/><line x1="449" y1="113" x2="449" y2="133" stroke="#2e2a18" stroke-width="0.9"/><path d="M439.8,119.2 Q449,121.0 458.2,119.2 M439,124.2 Q449,126.5 459,124.2 M441.5,129.5 Q449,131.5 456.5,129.5" fill="none" stroke="#2e2a18" stroke-width="0.8"/><circle cx="481" cy="120" r="11" fill="#777" stroke="#e020e0" stroke-width="1.3"/><ellipse cx="481" cy="120" rx="5" ry="11" fill="none" stroke="#e020e0" stroke-width="1.2"/><line x1="470" y1="117" x2="492" y2="117" stroke="#e020e0" stroke-width="1.2"/><line x1="471" y1="124" x2="491" y2="124" stroke="#e020e0" stroke-width="1.2"/><path d="M466,108 L490,104 L496,108 L496,131 L472,135 L466,131 Z M466,108 L472,112 L496,108 M472,112 L472,135" fill="none" stroke="#eee" stroke-width="1"/><ellipse cx="512" cy="129" rx="12" ry="3" fill="#000" opacity="0.25"/><polygon points="500,124 516,111 530,120 513,132" fill="#b1a97b" stroke="#2e2a18" stroke-width="1"/><polygon points="513,132 516,111 530,120" fill="#958d64" stroke="#2e2a18" stroke-width="0.8"/><polygon points="500,112 512,105 522,110 510,118" fill="#8a8460" stroke="#2e2a18" stroke-width="0.8" opacity="0.9"/><path d="M500,112 L522,110 M512,105 L510,118 M506,108 L516,114" stroke="#2e2a18" stroke-width="0.6"/><path d="M537,103 L533.5,103 L533.5,136 L537,136 M561,103 L565,103 L565,136 L561,136" fill="none" stroke="#111" stroke-width="4"/><path d="M537,103 L533.5,103 L533.5,136 L537,136 M561,103 L565,103 L565,136 L561,136" fill="none" stroke="#1ef01e" stroke-width="2.2"/><polygon points="535,110 544,106 548,113 539,117" fill="#aea679" stroke="#2e2a18" stroke-width="0.9"/><polygon points="550,109 560,105 564,111 554,115" fill="#aea679" stroke="#2e2a18" stroke-width="0.9"/><polygon points="550,125 558,121 562,128 554,132" fill="#8ec0e8" stroke="#2e2a18" stroke-width="0.9"/><path d="M539,129 L549,116 M541,131 L550,119" stroke="#ddd" stroke-width="1"/><circle cx="538.5" cy="128" r="2.2" fill="none" stroke="#f07020" stroke-width="1.4"/><circle cx="541" cy="131.5" r="2.2" fill="none" stroke="#f07020" stroke-width="1.4"/><polygon points="570,119 581,112 589,118 578,126" fill="#aea679" stroke="#2e2a18" stroke-width="0.9"/><polygon points="575,123 584,117 590,123 581,129" fill="#aea679" stroke="#2e2a18" stroke-width="0.9"/><path d="M583,112 L592,108 L599,112 L599,122 L590,127 L583,122 Z" fill="#a59d72" stroke="#2e2a18" stroke-width="1"/><path d="M583,112 L592,108 L599,112 L590,116 Z" fill="#8ec0e8" stroke="#2e2a18" stroke-width="0.8"/><path d="M590,116 L590,127" stroke="#2e2a18"/><circle cx="591" cy="112" r="0.8" fill="#222"/><polygon points="606,113 612,110 616,115 610,118" fill="#9a9370" stroke="#2e2a18" stroke-width="0.8"/><polygon points="618,107 626,104 631,110 623,113" fill="#9a9370" stroke="#2e2a18" stroke-width="0.8"/><polygon points="609,124 627,117 634,124 616,131" fill="#aea679" stroke="#2e2a18" stroke-width="1"/><path d="M617,121 L624,128 M620,120 L627,127" stroke="#a8d8f8" stroke-width="1.6"/><ellipse cx="650" cy="128" rx="8" ry="3" fill="#000" opacity="0.25"/><path d="M644,112 L656,108 L667,112 L666,127 L656,131 L645,126 Z" fill="#aea679" stroke="#2e2a18" stroke-width="1"/><path d="M644,112 L656,108 L667,112 L657,115 Z" fill="#c8c09a" stroke="#2e2a18" stroke-width="0.8"/><path d="M657,115 L656,131" stroke="#2e2a18" stroke-width="0.9"/><polygon points="650,113 664,112 659,126" fill="#90c0e8" stroke="#2e2a18" stroke-width="0.6"/><polygon points="675,111 688,105 697,111 684,118" fill="#8a8460" stroke="#2e2a18" stroke-width="0.9"/><polygon points="674,123 683,118 691,127 682,132" fill="#aea679" stroke="#2e2a18" stroke-width="0.9"/><polygon points="687,119 696,115 704,124 695,128" fill="#aea679" stroke="#2e2a18" stroke-width="0.9"/><polygon points="710,108 722,104 730,112 718,116" fill="#8a8460" stroke="#2e2a18" stroke-width="0.8"/><path d="M714,106.5 L722,114.5 M718,105 L726,113.5 M714,112 L726,108" stroke="#2e2a18" stroke-width="0.6"/><polygon points="710,119 720,114 733,124 723,130" fill="#aea679" stroke="#2e2a18" stroke-width="1"/><path d="M715,116.5 L728,127 M713,124 L726,118.5" stroke="#2e2a18" stroke-width="0.7"/><rect x="711" y="112" width="2.5" height="2.5" fill="#ddd"/><rect x="721" y="109" width="2.5" height="2.5" fill="#ddd"/><rect x="718" y="115" width="3" height="3" fill="#ee0" stroke="#222" stroke-width="0.5"/><rect x="722" y="127" width="3" height="3" fill="#ee0" stroke="#222" stroke-width="0.5"/><path transform="translate(724,116) scale(0.85)" d="M0,0 L0,12 L3,9 L5.5,14 L7.5,13 L5,8 L9,8 Z" fill="#b00000" stroke="#fff" stroke-width="1"/><polygon points="745,110 753,106 758,112 750,116" fill="#8a8460" stroke="#2e2a18" stroke-width="0.8"/><polygon points="757,106 765,102 771,108 763,112" fill="#8a8460" stroke="#2e2a18" stroke-width="0.8"/><polygon points="746,122 758,115 774,124 762,131" fill="#aea679" stroke="#2e2a18" stroke-width="1"/><path d="M752,118.5 L768,127.5 M754,126 L766,119" stroke="#2e2a18" stroke-width="0.8"/><path d="M757,112 L762,118 M760,111 L765,117" stroke="#d02020" stroke-width="1.4"/><path d="M760,124 L764,129" stroke="#fff" stroke-width="1"/><polygon points="780,108 791,104 801,111 790,115" fill="#8a8460" stroke="#2e2a18" stroke-width="0.9"/><polygon points="780,120 792,112 809,123 796,132" fill="#aea679" stroke="#2e2a18" stroke-width="1"/><path d="M792,112 L796,132 M786,116 L801,111" stroke="#2e2a18" stroke-width="0.9"/><path d="M814,107 L825,104 L830,107 L830,113 L819,116 L814,113 Z" fill="#aea679" stroke="#2e2a18" stroke-width="0.9"/><path d="M816,110 L828,108" stroke="#eee" stroke-width="1"/><path d="M822,116 L834,113 L843,123 L833,133 L824,127 Z" fill="#a39b70" stroke="#2e2a18" stroke-width="1"/><path d="M824,121 L834,119 L833,133" stroke="#2e2a18" stroke-width="0.8" fill="none"/><rect x="836" y="119" width="3" height="3" fill="#ee0" stroke="#222" stroke-width="0.5"/><polygon points="850,115 866,107 880,116 864,123" fill="#aea679" stroke="#2e2a18" stroke-width="1"/><path d="M858,111 L872,119.5 M857,119 L873,111.5" stroke="#2e2a18" stroke-width="0.8"/><polygon points="853,124 861,120 868,126 860,130" fill="#8ec0e8" stroke="#2e2a18" stroke-width="0.8"/><circle cx="860.5" cy="125" r="0.8" fill="#222"/><defs><linearGradient id="bcone" x1="0" x2="1"><stop offset="0" stop-color="#4a78b0"/><stop offset="0.5" stop-color="#d8ecff"/><stop offset="1" stop-color="#3a68a0"/></linearGradient></defs><path d="M883,129 Q900,118 915,126 L912,131 Q898,134 885,132 Z" fill="#6a9ad0" stroke="#2a4a70" stroke-width="0.6"/><path d="M900,110 L891,127 Q900,130 909,127 Z" fill="url(#bcone)"/><ellipse cx="900" cy="121" rx="8.5" ry="3.5" fill="none" stroke="#d82020" stroke-width="1.6"/><path d="M900,120 L900,106" stroke="#d82020" stroke-width="1.5"/><polygon points="900,103 896.5,109 903.5,109" fill="#d82020"/><polygon points="922,105 938,108 938,129 922,126" fill="url(#chk)" stroke="#222" stroke-width="0.6"/><path d="M937,116 L945,111 L944,108 L951,109 L948,115 L947,113 L939,119 Z" fill="#3aa84a" stroke="#0c3010" stroke-width="0.6"/><path transform="translate(918,123) scale(1.0)" d="M0,2 L8,0 L8,2 L5,3 L5,10 L3,10.5 L3,3.5 L0,4 Z" fill="#3cc040" stroke="#0c4010" stroke-width="0.6"/><path d="M955,106 Q957,118 962,120 L974,117 L975,135 L965,134 Q955,128 953,116 Z" fill="url(#chk)" stroke="#222" stroke-width="0.6"/><path d="M973,117 L981,112 L980,109 L987,110 L984,116 L983,114 L975,120 Z" fill="#3aa84a" stroke="#0c3010" stroke-width="0.6"/><path transform="translate(969,127) scale(0.9)" d="M0,2 L8,0 L8,2 L5,3 L5,10 L3,10.5 L3,3.5 L0,4 Z" fill="#3cc040" stroke="#0c4010" stroke-width="0.6"/><path d="M995,108 Q985,118 992,128 Q1002,136 1010,128 L1012,116 Z" fill="url(#chk)" stroke="#222" stroke-width="0.6"/><path d="M1009,117 L1017,112 L1016,109 L1023,110 L1020,116 L1019,114 L1011,120 Z" fill="#3aa84a" stroke="#0c3010" stroke-width="0.6"/><path transform="translate(1005,127) scale(0.9)" d="M0,2 L8,0 L8,2 L5,3 L5,10 L3,10.5 L3,3.5 L0,4 Z" fill="#3cc040" stroke="#0c4010" stroke-width="0.6"/><path d="M1027,108 L1039,104 L1051,108 L1051,126 L1039,132 L1027,126 Z" fill="url(#chk)" stroke="#222" stroke-width="0.6"/><path d="M1027,130 L1039,125 L1051,130 L1039,135 Z" fill="url(#chk)"/><path d="M1032,114 L1046,114 M1039,114 L1039,126" stroke="#111" stroke-width="4.5"/><path d="M1032,114 L1046,114 M1039,114 L1039,126" stroke="#3cc040" stroke-width="2.5"/><rect x="1062" y="106" width="25" height="27" fill="#eee" stroke="#888" stroke-width="1"/><rect x="1062" y="106" width="25" height="4" fill="#6ab0e8"/><polygon points="1070,112 1080,115 1080,130 1070,127" fill="url(#chk)" stroke="#222" stroke-width="0.6"/><path transform="translate(1066,121) scale(0.8)" d="M0,2 L8,0 L8,2 L5,3 L5,10 L3,10.5 L3,3.5 L0,4 Z" fill="#3cc040" stroke="#0c4010" stroke-width="0.6"/><line x1="116.5" y1="46" x2="116.5" y2="69" stroke="#666" stroke-width="1"/><rect x="114.5" y="53.5" width="4" height="8" rx="2" fill="#444" stroke="#777" stroke-width="1"/><path d="M127,48 L137,48 L141,52 L141,65 L127,65 Z" fill="#f4f4f4" stroke="#333" stroke-width="1"/><path d="M134,57 L134,52 M134,57 L129,61 M134,57 L139,61" stroke="#1a1" stroke-width="1.6"/><path d="M134,57 L129,61" stroke="#22f" stroke-width="1.6"/><path d="M134,57 L139,61" stroke="#e22" stroke-width="1.6"/><path d="M150,52 L156,52 L158,54 L166,54 L166,64 L150,64 Z" fill="#c8a850" stroke="#5a4a20" stroke-width="1"/><path d="M150,64 L153,57 L168,57 L165,64 Z" fill="#e8d080" stroke="#6a5a20" stroke-width="1"/><rect x="179" y="50" width="15" height="15" rx="2" fill="#6a6a6a" stroke="#222" stroke-width="1"/><rect x="182" y="51" width="9" height="7" fill="#ddd"/><rect x="183" y="60" width="7" height="4" fill="#eee"/><line x1="202.5" y1="46" x2="202.5" y2="69" stroke="#5e5e5e" stroke-width="1"/><polygon points="203.5,53.5 207.5,57.5 203.5,61.5" fill="#666"/><line x1="214.5" y1="46" x2="214.5" y2="69" stroke="#666" stroke-width="1"/><rect x="212.5" y="53.5" width="4" height="8" rx="2" fill="#444" stroke="#777" stroke-width="1"/><rect x="225" y="49" width="6" height="6" fill="#e04040" stroke="#222" stroke-width="0.8"/><rect x="225" y="57" width="6" height="6" fill="#bbb" stroke="#222" stroke-width="0.8"/><rect x="233" y="55" width="6" height="6" fill="#bbb" stroke="#222" stroke-width="0.8"/><path transform="translate(236,57) scale(0.75)" d="M0,0 L0,12 L3,9 L5.5,14 L7.5,13 L5,8 L9,8 Z" fill="#b00000" stroke="#fff" stroke-width="1"/><rect x="248" y="44.5" width="24" height="25" rx="3" fill="#555" stroke="#333" stroke-width="1"/><circle cx="255" cy="55" r="5" fill="#6ab8f0" stroke="#222" stroke-width="0.8"/><rect x="256" y="56" width="11" height="10" fill="#8cc8f0" stroke="#3c3" stroke-width="1.3"/><path transform="translate(263,60) scale(0.75)" d="M0,0 L0,12 L3,9 L5.5,14 L7.5,13 L5,8 L9,8 Z" fill="#b00000" stroke="#fff" stroke-width="1"/><rect x="278" y="50" width="6" height="6" fill="#bbb" stroke="#222" stroke-width="0.6"/><rect x="286" y="50" width="6" height="6" fill="#bbb" stroke="#222" stroke-width="0.6"/><rect x="278" y="58" width="6" height="6" fill="#bbb" stroke="#222" stroke-width="0.6"/><rect x="286" y="58" width="6" height="6" fill="#3c3" stroke="#222" stroke-width="0.6"/><path transform="translate(289,60) scale(0.75)" d="M0,0 L0,12 L3,9 L5.5,14 L7.5,13 L5,8 L9,8 Z" fill="#b00000" stroke="#fff" stroke-width="1"/><line x1="302" y1="46" x2="302" y2="69" stroke="#5e5e5e" stroke-width="1"/><polygon points="303,53.5 307,57.5 303,61.5" fill="#666"/><line x1="316.7" y1="46" x2="316.7" y2="69" stroke="#666" stroke-width="1"/><rect x="314.7" y="53.5" width="4" height="8" rx="2" fill="#444" stroke="#777" stroke-width="1"/><rect x="332.5" y="53.5" width="12.5" height="12.5" fill="#333" stroke="#aaa" stroke-width="1"/><path d="M336.7,53.5 v12.5 M340.9,53.5 v12.5 M332.5,57.7 h12.5 M332.5,61.9 h12.5" stroke="#aaa" stroke-width="0.9"/><path d="M363,50.5 Q370,50 369,54 Q368,57 364,59 Q360,62 365,64 L369,64.5" stroke="#7ab8e8" fill="none" stroke-width="1.1"/><rect x="368" y="63" width="3.5" height="3.5" fill="#ee0" stroke="#222" stroke-width="0.5"/><circle cx="388" cy="61" r="2.3" fill="#5aa0e0"/><circle cx="413" cy="57.5" r="7.5" fill="#8a8058" stroke="#2a2818" stroke-width="0.8"/><path d="M406,57.5 h15 M413,50 v15" stroke="#2a2818" stroke-width="0.6"/><circle cx="419" cy="50" r="3" fill="#5ab0f0" stroke="#fff" stroke-width="1"/><path d="M433,60 L441,56 L450,60 L442,65 Z M437,58 L446,62.5 M437,62.5 L445.5,58" fill="none" stroke="#ccc" stroke-width="0.9"/><g transform="translate(331,52.4) rotate(-40)"><path d="M-3.3,5 L-3.3,0 A3.3,3.3 0 0 1 3.3,0 L3.3,5" stroke="#1a0a08" stroke-width="4.6" fill="none" opacity="0.5"/><path d="M-3.3,5 L-3.3,0 A3.3,3.3 0 0 1 3.3,0 L3.3,5" stroke="#d83a28" stroke-width="3.4" fill="none"/><rect x="-5" y="4.6" width="3.4" height="2.6" fill="#f4f4f4"/><rect x="1.6" y="4.6" width="3.4" height="2.6" fill="#f4f4f4"/></g><g transform="translate(357.5,52.4) rotate(-40)"><path d="M-3.3,5 L-3.3,0 A3.3,3.3 0 0 1 3.3,0 L3.3,5" stroke="#1a0a08" stroke-width="4.6" fill="none" opacity="0.5"/><path d="M-3.3,5 L-3.3,0 A3.3,3.3 0 0 1 3.3,0 L3.3,5" stroke="#d83a28" stroke-width="3.4" fill="none"/><rect x="-5" y="4.6" width="3.4" height="2.6" fill="#f4f4f4"/><rect x="1.6" y="4.6" width="3.4" height="2.6" fill="#f4f4f4"/></g><g transform="translate(380.5,52.4) rotate(-40)"><path d="M-3.3,5 L-3.3,0 A3.3,3.3 0 0 1 3.3,0 L3.3,5" stroke="#1a0a08" stroke-width="4.6" fill="none" opacity="0.5"/><path d="M-3.3,5 L-3.3,0 A3.3,3.3 0 0 1 3.3,0 L3.3,5" stroke="#d83a28" stroke-width="3.4" fill="none"/><rect x="-5" y="4.6" width="3.4" height="2.6" fill="#f4f4f4"/><rect x="1.6" y="4.6" width="3.4" height="2.6" fill="#f4f4f4"/></g><g transform="translate(408,52.4) rotate(-40)"><path d="M-3.3,5 L-3.3,0 A3.3,3.3 0 0 1 3.3,0 L3.3,5" stroke="#1a0a08" stroke-width="4.6" fill="none" opacity="0.5"/><path d="M-3.3,5 L-3.3,0 A3.3,3.3 0 0 1 3.3,0 L3.3,5" stroke="#d83a28" stroke-width="3.4" fill="none"/><rect x="-5" y="4.6" width="3.4" height="2.6" fill="#f4f4f4"/><rect x="1.6" y="4.6" width="3.4" height="2.6" fill="#f4f4f4"/></g><g transform="translate(435.5,52.4) rotate(-40)"><path d="M-3.3,5 L-3.3,0 A3.3,3.3 0 0 1 3.3,0 L3.3,5" stroke="#1a0a08" stroke-width="4.6" fill="none" opacity="0.5"/><path d="M-3.3,5 L-3.3,0 A3.3,3.3 0 0 1 3.3,0 L3.3,5" stroke="#d83a28" stroke-width="3.4" fill="none"/><rect x="-5" y="4.6" width="3.4" height="2.6" fill="#f4f4f4"/><rect x="1.6" y="4.6" width="3.4" height="2.6" fill="#f4f4f4"/></g><g transform="translate(462,52.4) rotate(-40)"><path d="M-3.3,5 L-3.3,0 A3.3,3.3 0 0 1 3.3,0 L3.3,5" stroke="#1a0a08" stroke-width="4.6" fill="none" opacity="0.5"/><path d="M-3.3,5 L-3.3,0 A3.3,3.3 0 0 1 3.3,0 L3.3,5" stroke="#d83a28" stroke-width="3.4" fill="none"/><rect x="-5" y="4.6" width="3.4" height="2.6" fill="#f4f4f4"/><rect x="1.6" y="4.6" width="3.4" height="2.6" fill="#f4f4f4"/></g><line x1="583" y1="46" x2="583" y2="69" stroke="#5e5e5e" stroke-width="1"/><polygon points="584,53.5 588,57.5 584,61.5" fill="#666"/><line x1="594.6" y1="46" x2="594.6" y2="69" stroke="#666" stroke-width="1"/><rect x="592.6" y="53.5" width="4" height="8" rx="2" fill="#444" stroke="#777" stroke-width="1"/><rect x="605" y="49" width="18" height="16" fill="#eee" stroke="#222" stroke-width="1"/><rect x="606" y="50" width="16" height="3" fill="#5ab0f0"/><path d="M607,56 L621,59 L620,67 L606,64 Z" fill="#555" stroke="#111" stroke-width="1"/><path d="M607,55 L620,49 L621,52 L608,58 Z" fill="#eee" stroke="#111" stroke-width="0.8"/><path d="M610,54 l2,-1 M614,52 l2,-1 M617,51 l2,-1" stroke="#111" stroke-width="1.3"/><path d="M634,56 L648,59 L647,67 L633,64 Z" fill="#6a6a6a" stroke="#111" stroke-width="1"/><path d="M634,55 L647,49 L648,52 L635,58 Z" fill="#eee" stroke="#111" stroke-width="0.8"/><path d="M637,54 l2,-1 M641,52 l2,-1 M644,51 l2,-1" stroke="#111" stroke-width="1.3"/><path d="M661,56 L675,59 L674,67 L660,64 Z" fill="#333" stroke="#111" stroke-width="1"/><path d="M661,55 L674,49 L675,52 L662,58 Z" fill="#eee" stroke="#111" stroke-width="0.8"/><path d="M664,54 l2,-1 M668,52 l2,-1 M671,51 l2,-1" stroke="#111" stroke-width="1.3"/><text x="661" y="67" font-family="Liberation Sans" font-size="7" font-weight="bold" fill="#eee">IPR</text><circle cx="688" cy="52" r="2.5" fill="none" stroke="#ccc" stroke-width="1.3"/><circle cx="688" cy="61" r="2.5" fill="none" stroke="#ccc" stroke-width="1.3"/><path d="M691,56 L705,59 L704,67 L690,64 Z" fill="#6a6a6a" stroke="#111" stroke-width="1"/><path d="M691,55 L704,49 L705,52 L692,58 Z" fill="#eee" stroke="#111" stroke-width="0.8"/><path d="M694,54 l2,-1 M698,52 l2,-1 M701,51 l2,-1" stroke="#111" stroke-width="1.3"/><line x1="712.7" y1="46" x2="712.7" y2="69" stroke="#666" stroke-width="1"/><rect x="710.7" y="53.5" width="4" height="8" rx="2" fill="#444" stroke="#777" stroke-width="1"/><polygon points="722,53 731,53 726.5,58" fill="none" stroke="#aaa" stroke-width="1"/><rect x="734.5" y="48.5" width="15" height="14" fill="none" stroke="#aaa" stroke-width="1"/><path d="M742,48.5 v14 M734.5,55.5 h15" stroke="#aaa"/><circle cx="742" cy="55.5" r="2" fill="#444" stroke="#aaa"/><rect x="1264" y="57" width="17" height="9" fill="#666" stroke="#222" stroke-width="1"/><rect x="1273" y="49" width="8" height="8" fill="#333"/><circle cx="1277" cy="53" r="1.8" fill="none" stroke="#ccc" stroke-width="0.8"/><path d="M1273,66 h8 v-9" stroke="#eee" fill="none" stroke-width="1.2"/><rect x="1262.5" y="55.5" width="3" height="3" fill="#888" stroke="#ddd" stroke-width="0.6"/><rect x="1262.5" y="64" width="3" height="3" fill="#888" stroke="#ddd" stroke-width="0.6"/><rect x="1271" y="55.5" width="3" height="3" fill="#888" stroke="#ddd" stroke-width="0.6"/><rect x="1290" y="50" width="16.5" height="16" rx="2" fill="#777" stroke="#222" stroke-width="1"/><path d="M1292,56 h4 M1292,59 h4 M1292,62 h4" stroke="#eee" stroke-width="1"/><rect x="1297" y="54" width="8" height="10" fill="#444"/><path d="M1297,57.5 h8 M1297,61 h8 M1301,54 v10" stroke="#777" stroke-width="0.8"/><circle cx="1317.5" cy="52.5" r="1.6" fill="none" stroke="#eee" stroke-width="0.9"/><circle cx="1317.5" cy="58.5" r="1.6" fill="none" stroke="#eee" stroke-width="0.9"/><circle cx="1317.5" cy="64.5" r="1.6" fill="none" stroke="#eee" stroke-width="0.9"/><path d="M1321,52.5 h4 M1321,58.5 h4 M1321,64.5 h4 M1330,53 v11" stroke="#eee" stroke-width="1.2"/><path d="M1327,50 a3,3 0 0 0 6,0" fill="none" stroke="#eee" stroke-width="1.2"/><rect x="1337.5" y="45.5" width="24.5" height="24.5" rx="3" fill="#5a5a5a" stroke="#333" stroke-width="1"/><path d="M1341,62 L1350,58 L1358,62 L1349,66 Z" fill="#777" stroke="#222" stroke-width="0.8"/><path d="M1341,58 L1350,54 L1358,58 L1349,62 Z" fill="#ddd" stroke="#222" stroke-width="0.8"/><rect x="1348.5" y="49" width="7" height="8" fill="#eee" stroke="#222" stroke-width="0.7"/><path d="M1348.5,51.5 h7 M1348.5,54 h7" stroke="#222" stroke-width="0.6"/><path d="M1349,82 L1359,82 L1358,93 L1350,93 Z" fill="#777" stroke="#222" stroke-width="0.8"/><ellipse cx="1354" cy="81" rx="5.5" ry="1.8" fill="#888" stroke="#222" stroke-width="0.7"/><path d="M1352,84 v8 M1354,84 v8 M1356,84 v8" stroke="#444" stroke-width="0.8"/><rect x="4.5" y="160.5" width="35" height="35" rx="2" fill="#a8a8a8" stroke="#2a2a2a" stroke-width="1"/><path transform="translate(17,170) scale(1.25)" d="M0,0 L0,12 L3,9 L5.5,14 L7.5,13 L5,8 L9,8 Z" fill="#b00000" stroke="#fff" stroke-width="1"/><rect x="4.5" y="198.5" width="35" height="33" rx="2" fill="#444" stroke="#2a2a2a" stroke-width="1"/><path d="M13,205 Q22,200 30,207 Q31,217 27,219 Q24,226 14,225 Q9,215 13,205 Z" fill="none" stroke="#bbb" stroke-width="1" stroke-dasharray="3,2"/><path transform="translate(24,211) scale(1.0)" d="M0,0 L0,12 L3,9 L5.5,14 L7.5,13 L5,8 L9,8 Z" fill="#b00000" stroke="#fff" stroke-width="1"/><rect x="4.5" y="235.5" width="35" height="33" rx="2" fill="#444" stroke="#2a2a2a" stroke-width="1"/><ellipse cx="20" cy="257" rx="9" ry="5" fill="none" stroke="#e01010" stroke-width="2"/><path d="M20,256 L33,243" stroke="#8a6030" stroke-width="2.5"/><path d="M15,258 Q18,250 24,252 Z" fill="#e8e0c0"/><rect x="11" y="254" width="2.5" height="2.5" fill="#ff0" stroke="#222" stroke-width="0.5"/><rect x="14" y="259" width="2.5" height="2.5" fill="#ff0" stroke="#222" stroke-width="0.5"/><rect x="21" y="259" width="2.5" height="2.5" fill="#ff0" stroke="#222" stroke-width="0.5"/><rect x="4.5" y="272.5" width="35" height="33" rx="2" fill="#444" stroke="#2a2a2a" stroke-width="1"/><path d="M23,276 L17,293 A6,2.5 0 0 0 30,293 Z" fill="#4a90d0"/><path d="M23,276 L26,293 L30,293 Z" fill="#2a5a90"/><line x1="10" y1="293" x2="28" y2="301" stroke="#d01818" stroke-width="2.5"/><polygon points="31,303 23,302 28,296" fill="#e02020"/><rect x="4.5" y="309.5" width="35" height="33" rx="2" fill="#444" stroke="#2a2a2a" stroke-width="1"/><circle cx="22" cy="324" r="9.5" fill="url(#bsph)"/><path d="M12,330 Q10,340 22,340 Q33,340 33,330" fill="none" stroke="#e01010" stroke-width="3"/><polygon points="33,326 36,333 29,333" fill="#e01010"/><rect x="4.5" y="346.5" width="35" height="33" rx="2" fill="#444" stroke="#2a2a2a" stroke-width="1"/><path d="M16,357 L23,354 L29,357 L29,366 L23,369 L16,366 Z" fill="#5aa8e8" stroke="#2a5a90" stroke-width="0.8"/><path d="M16,357 L23,360 L29,357 M23,360 L23,369" stroke="#2a5a90" stroke-width="0.8" fill="none"/><path d="M14,355 L8,349 M31,355 L37,349 M14,369 L8,375 M31,369 L37,375" stroke="#e01010" stroke-width="2"/><polygon points="7,348 12,348 7,353" fill="#e01010"/><polygon points="38,348 33,348 38,353" fill="#e01010"/><polygon points="7,376 12,376 7,371" fill="#e01010"/><polygon points="38,376 33,376 38,371" fill="#e01010"/><rect x="4.5" y="418.5" width="35" height="33" rx="2" fill="#444" stroke="#2a2a2a" stroke-width="1"/><path d="M23,423 L13,435 L25,445" fill="none" stroke="#223" stroke-width="3"/><path d="M23,423 L13,435 L25,445" fill="none" stroke="#8ab8dc" stroke-width="1.6"/><circle cx="23" cy="422.5" r="3.8" fill="#a8d0f0" stroke="#1a2a3a" stroke-width="1"/><circle cx="13" cy="435" r="3.8" fill="#a8d0f0" stroke="#1a2a3a" stroke-width="1"/><circle cx="25.5" cy="445" r="3.8" fill="#a8d0f0" stroke="#1a2a3a" stroke-width="1"/><circle cx="22" cy="421.5" r="1.2" fill="#fff"/><circle cx="12" cy="434" r="1.2" fill="#fff"/><circle cx="24.5" cy="444" r="1.2" fill="#fff"/><rect x="6" y="467" width="32" height="32" rx="2" fill="url(#btnw)" stroke="#333" stroke-width="1"/><path d="M12,482 L22,476 L32,482 L22,488 Z M17,479 L27,485 M27,479 L17,485" fill="none" stroke="#333" stroke-width="1.1"/><path d="M10,494 v-5 M10,494 l-3,2 M10,494 l4,2" stroke="#1c1" stroke-width="1.2"/><path d="M10,494 l-3,2" stroke="#22f" stroke-width="1.2"/><path d="M10,494 l4,2" stroke="#e22" stroke-width="1.2"/><rect x="6" y="505" width="15.5" height="15.5" fill="url(#btnw)" stroke="#333" stroke-width="0.8"/><rect x="22" y="505" width="15.5" height="15.5" fill="url(#btnw)" stroke="#333" stroke-width="0.8"/><rect x="6" y="521" width="15.5" height="16" fill="url(#btnw)" stroke="#333" stroke-width="0.8"/><rect x="22" y="521" width="15.5" height="16" fill="url(#btnw)" stroke="#333" stroke-width="0.8"/><path d="M9,513 h10 M14,508 v10 M9,529 h10 M14,524 v10 M25,529 h10 M30,524 v10" stroke="#333" stroke-width="1.2"/><path d="M24,511 L29,508 L35,511 L29,514 Z" fill="none" stroke="#333" stroke-width="0.8"/><path d="M25,518 l3,-2 l3,2" stroke="#e22" stroke-width="0.8" fill="none"/><rect x="6" y="543" width="32" height="24" rx="2" fill="url(#btnw)" stroke="#333" stroke-width="1"/><path d="M12,556 L22,550 L32,556 L22,562 Z M17,553 L27,559 M27,553 L17,559" fill="none" stroke="#333" stroke-width="1.1"/><rect x="6" y="565" width="32" height="33" fill="#f2fafa"/><polygon points="9,590 9,574 16,570 16,590" fill="#1fa7ae"/><polygon points="16,570 22,567 22,583 16,578" fill="#5fd6da"/><polygon points="22,567 28,570 28,578 22,583" fill="#138c94"/><polygon points="28,570 35,574 35,590 28,590" fill="#23b3ba"/><polygon points="9,574 16,570 16,578" fill="#7de2e4"/><polygon points="16,578 22,583 22,590 16,590" fill="#0f7a82" opacity="0.9"/><rect x="6" y="590" width="32" height="8" fill="#d4eeee"/><text x="19" y="597" font-family="Liberation Sans" font-size="6.5" font-weight="bold" fill="#555">MAYA</text><line x1="50.5" y1="169" x2="50.5" y2="186" stroke="#666" stroke-width="1"/><rect x="48.5" y="173.5" width="4" height="8" rx="2" fill="#444" stroke="#777" stroke-width="1"/><line x1="182" y1="169" x2="182" y2="186" stroke="#666" stroke-width="1"/><rect x="180" y="173.5" width="4" height="8" rx="2" fill="#444" stroke="#777" stroke-width="1"/><line x1="333" y1="169" x2="333" y2="186" stroke="#666" stroke-width="1"/><rect x="331" y="173.5" width="4" height="8" rx="2" fill="#444" stroke="#777" stroke-width="1"/><line x1="484" y1="169" x2="484" y2="186" stroke="#666" stroke-width="1"/><rect x="482" y="173.5" width="4" height="8" rx="2" fill="#444" stroke="#777" stroke-width="1"/><line x1="574.6" y1="169" x2="574.6" y2="186" stroke="#666" stroke-width="1"/><rect x="572.6" y="173.5" width="4" height="8" rx="2" fill="#444" stroke="#777" stroke-width="1"/><line x1="605.6" y1="169" x2="605.6" y2="186" stroke="#666" stroke-width="1"/><rect x="603.6" y="173.5" width="4" height="8" rx="2" fill="#444" stroke="#777" stroke-width="1"/><circle cx="62" cy="174" r="4.3" fill="#ddd" stroke="#222" stroke-width="1"/><circle cx="62" cy="174" r="1.8" fill="#333"/><circle cx="68.5" cy="173.5" r="3.8" fill="#ddd" stroke="#222" stroke-width="1"/><circle cx="68.5" cy="173.5" r="1.5" fill="#333"/><path d="M61,180 L70,177 L72,182 L63,185 Z" fill="#111" stroke="#555" stroke-width="0.6"/><path d="M71,178 l4,-1 v4 l-4,1 Z" fill="#111"/><circle cx="81" cy="174" r="3.5" fill="#ddd" stroke="#222" stroke-width="1"/><circle cx="81" cy="174" r="1.3" fill="#333"/><circle cx="86" cy="173.5" r="3" fill="#ddd" stroke="#222" stroke-width="1"/><path d="M80,179 L86,177 L87,181 L81,183 Z" fill="#111"/><rect x="87.5" y="176" width="6" height="8" fill="#f4f4f4" stroke="#222" stroke-width="0.8"/><path d="M88.5,178 h4 M88.5,180 h4 M88.5,182 h4" stroke="#444" stroke-width="0.6"/><rect x="100" y="171" width="14" height="13" fill="#f4f4f4" stroke="#222" stroke-width="0.8"/><rect x="102" y="173" width="3" height="9" fill="#ccc"/><path d="M108,169.5 L111.5,169.5 L111.5,182 L109.75,180 L108,182 Z" fill="#2cb82c" stroke="#0a400a" stroke-width="0.5"/><path d="M120,180 L127,169 L136,172 L133,183 Z" fill="#eee" stroke="#333" stroke-width="0.7"/><path d="M122,179 L128,171 L134,173 L132,181 Z" fill="#3a6ad0"/><path d="M122,179 Q127,174 133,176 L132,181 Z" fill="#3aa83a"/><path d="M119,182 L133,184" stroke="#ccc" stroke-width="1.2"/><path d="M143,170 v10 M138,175 h10" stroke="#d02020" stroke-width="1.3"/><polygon points="143,168 141,171 145,171" fill="#d02020"/><polygon points="143,182 141,179 145,179" fill="#d02020"/><polygon points="136,175 139,173 139,177" fill="#d02020"/><polygon points="150,175 147,173 147,177" fill="#d02020"/><circle cx="150" cy="177" r="3.8" fill="#eee" stroke="#333" stroke-width="0.8"/><path d="M150,175 v4 M148,177 h4" stroke="#d02020" stroke-width="1.1"/><path d="M147.5,180 L144,184.5" stroke="#b07030" stroke-width="2"/><path d="M159,183 L170,170 L174,173 L163,186 Z" fill="#a01818" stroke="#400" stroke-width="0.6"/><path d="M159,183 L161.5,180.5 L163,186 Z" fill="#e8d8b8"/><path d="M170,170 L174,173" stroke="#e05050" stroke-width="1"/><rect x="189" y="168" width="18" height="18" rx="3" fill="#555" stroke="#2a2a2a" stroke-width="1"/><path d="M191,177 L198,172 L205,177 L198,182 Z" fill="none" stroke="#eee" stroke-width="1.2"/><path d="M194.5,174.5 L201.5,179.5 M201.5,174.5 L194.5,179.5" stroke="#eee" stroke-width="0.8"/><rect x="210" y="170" width="16" height="13" fill="#eee" stroke="#222" stroke-width="0.8"/><rect x="212" y="173" width="12" height="7" fill="#333"/><path d="M213,174 v5 M216,174 v5 M219,174 v5 M222,174 v5" stroke="#9cf" stroke-width="1.5"/><rect x="229" y="170" width="16" height="14" fill="#eee" stroke="#222" stroke-width="0.8"/><circle cx="237" cy="177" r="5" fill="url(#bsph)"/><rect x="249" y="168" width="18" height="18" rx="3" fill="#666" stroke="#2a2a2a" stroke-width="1"/><circle cx="258" cy="177" r="5.5" fill="#aaa" stroke="#333" stroke-width="1"/><rect x="270" y="170" width="16" height="14" fill="#ddd" stroke="#222" stroke-width="0.8"/><path d="M271,171 L285,183 M285,171 L271,183 M278,170 v14 M270,177 h16" stroke="#555" stroke-width="0.8"/><rect x="290" y="170" width="16" height="14" fill="#eee" stroke="#2a2" stroke-width="1.5"/><circle cx="295" cy="179" r="2" fill="#3a7ad0"/><circle cx="299" cy="175" r="2" fill="#3a7ad0"/><circle cx="302" cy="179" r="2" fill="#3a7ad0"/><rect x="310" y="170" width="16" height="14" fill="#eee" stroke="#2a2" stroke-width="1.5"/><text x="313" y="182" font-family="Liberation Serif" font-size="12" font-weight="bold" fill="#111">T</text><path d="M342,173 L349,170 L356,173 L356,181 L349,184 L342,181 Z M342,173 L349,176 L356,173 M349,176 V184" fill="none" stroke="#ddd" stroke-width="1"/><rect x="360" y="168" width="18" height="18" rx="3" fill="#555" stroke="#2a2a2a" stroke-width="1"/><path d="M362,173 L369,170 L376,173 L376,181 L369,184 L362,181 Z" fill="#6ab0e8" stroke="#333" stroke-width="0.8"/><path d="M362,173 L369,176 L376,173" fill="#9ad0f8"/><rect x="380" y="168" width="19" height="18" fill="#111"/><path d="M383,169 h-2 v16 h2 M396,169 h2 v16 h-2" stroke="#2f2" stroke-width="1.6" fill="none"/><circle cx="389.5" cy="177" r="6" fill="url(#chk6)"/><path d="M402,173 L409,170 L416,173 L416,181 L409,184 L402,181 Z" fill="#8ac0ec" stroke="#eee" stroke-width="1"/><path d="M402,173 L409,176 L416,173 M409,176 V184" fill="none" stroke="#eee" stroke-width="0.8"/><circle cx="428.6" cy="177" r="6.5" fill="url(#chk6)" stroke="#333" stroke-width="0.5"/><circle cx="448.7" cy="177" r="5" fill="#ff0" opacity="0.95"/><circle cx="448.7" cy="177" r="7" fill="#cc0" opacity="0.3"/><circle cx="468" cy="175" r="5" fill="url(#gsph)"/><ellipse cx="468" cy="182" rx="5" ry="1.5" fill="#666"/><path d="M492,184 Q492,178 499.5,178 Q507,178 507,184 Z" fill="#aaa"/><circle cx="499.5" cy="174" r="4.5" fill="#bbb"/><ellipse cx="520" cy="177" rx="8" ry="5.5" fill="#8a8a8a"/><path d="M514,176 h12" stroke="#aaa"/><circle cx="541" cy="177" r="7" fill="#888"/><path d="M541,170 v14" stroke="#ddd" stroke-width="1.5"/><circle cx="557" cy="179" r="5.5" fill="#8a8a8a"/><rect x="558" y="169" width="8" height="8" fill="#aaa"/><rect x="585" y="171" width="12" height="9" fill="none" stroke="#2c2" stroke-width="1" stroke-dasharray="2,1"/><path transform="translate(591,175) scale(0.7)" d="M0,0 L0,12 L3,9 L5.5,14 L7.5,13 L5,8 L9,8 Z" fill="#b00000" stroke="#fff" stroke-width="1"/><rect x="612" y="168" width="19" height="18" rx="2" fill="#1c1c1c"/><path d="M615,174 L621,171 L628,174 L628,181 L621,184 L615,181 Z M615,174 L621,177 L628,174 M621,177 V184" fill="none" stroke="#ddd" stroke-width="1"/><rect x="632" y="168" width="19" height="18" rx="2" fill="#1c1c1c"/><rect x="635" y="174" width="9" height="9" fill="none" stroke="#ddd" stroke-width="1"/><rect x="639" y="170" width="9" height="9" fill="none" stroke="#ddd" stroke-width="1"/><rect x="652" y="168" width="19" height="18" rx="2" fill="#1c1c1c"/><path d="M657,177 L665,172 M657,177 L665,182" stroke="#ddd" stroke-width="1.3"/><circle cx="657" cy="177" r="2.3" fill="#1c1c1c" stroke="#ddd" stroke-width="1.2"/><circle cx="665" cy="172" r="2.3" fill="#1c1c1c" stroke="#ddd" stroke-width="1.2"/><circle cx="665" cy="182" r="2.3" fill="#1c1c1c" stroke="#ddd" stroke-width="1.2"/><rect x="1140" y="154" width="1.5" height="1.5" fill="#5e5e5e"/><rect x="1143" y="157" width="1.5" height="1.5" fill="#5e5e5e"/><rect x="1146" y="154" width="1.5" height="1.5" fill="#5e5e5e"/><rect x="1149" y="157" width="1.5" height="1.5" fill="#5e5e5e"/><rect x="1152" y="154" width="1.5" height="1.5" fill="#5e5e5e"/><rect x="1155" y="157" width="1.5" height="1.5" fill="#5e5e5e"/><rect x="1158" y="154" width="1.5" height="1.5" fill="#5e5e5e"/><rect x="1161" y="157" width="1.5" height="1.5" fill="#5e5e5e"/><rect x="1164" y="154" width="1.5" height="1.5" fill="#5e5e5e"/><rect x="1167" y="157" width="1.5" height="1.5" fill="#5e5e5e"/><rect x="1305" y="154" width="1.5" height="1.5" fill="#5e5e5e"/><rect x="1308" y="157" width="1.5" height="1.5" fill="#5e5e5e"/><rect x="1311" y="154" width="1.5" height="1.5" fill="#5e5e5e"/><rect x="1314" y="157" width="1.5" height="1.5" fill="#5e5e5e"/><rect x="1317" y="154" width="1.5" height="1.5" fill="#5e5e5e"/><rect x="1320" y="157" width="1.5" height="1.5" fill="#5e5e5e"/><rect x="1323" y="154" width="1.5" height="1.5" fill="#5e5e5e"/><rect x="1326" y="157" width="1.5" height="1.5" fill="#5e5e5e"/><rect x="1329" y="154" width="1.5" height="1.5" fill="#5e5e5e"/><rect x="1332" y="157" width="1.5" height="1.5" fill="#5e5e5e"/><rect x="1337" y="149.5" width="13" height="13" rx="2.5" fill="#555" stroke="#222" stroke-width="1"/><rect x="1339.5" y="155" width="6.5" height="5.5" fill="none" stroke="#000" stroke-width="1.4"/><path d="M1342,155 v-2.5 h5.5 v5 h-1.5" fill="none" stroke="#000" stroke-width="1.4"/><rect x="1352" y="149.5" width="13" height="13" rx="2.5" fill="#555" stroke="#222" stroke-width="1"/><path d="M1355,152.5 l7,7 M1362,152.5 l-7,7" stroke="#000" stroke-width="1.6"/><path d="M1312,175.5 v-6" stroke="#2c2" stroke-width="2.2"/><polygon points="1312,168.5 1310,173 1314,173" fill="#4d4"/><path d="M1312,175.5 l-6,2" stroke="#23c" stroke-width="2.2"/><path d="M1312,175.5 l5,4" stroke="#d22" stroke-width="2.2"/><path d="M1312,172 v4 h-3 M1312,176 l3,2" stroke="#ccc" stroke-width="0.8" fill="none"/><circle cx="1333" cy="176" r="7" fill="#4e4e4e" stroke="#c8c8c8" stroke-width="1.3"/><path d="M1333,170 L1333,177 L1328.5,180.5 A6,6 0 0 1 1333,170 Z" fill="#8a8a8a"/><path d="M1347,183 L1357,173" stroke="#aaa" stroke-width="2"/><polygon points="1360,170 1352,172 1358,178" fill="#aaa"/><rect x="1133" y="300" width="2" height="2" fill="#5a5a5a"/><rect x="1133" y="304" width="2" height="2" fill="#5a5a5a"/><rect x="1133" y="308" width="2" height="2" fill="#5a5a5a"/><rect x="1133" y="312" width="2" height="2" fill="#5a5a5a"/><rect x="1133" y="316" width="2" height="2" fill="#5a5a5a"/><rect x="1133" y="320" width="2" height="2" fill="#5a5a5a"/><rect x="1133" y="324" width="2" height="2" fill="#5a5a5a"/><rect x="1133" y="328" width="2" height="2" fill="#5a5a5a"/><rect x="1133" y="332" width="2" height="2" fill="#5a5a5a"/><rect x="1133" y="336" width="2" height="2" fill="#5a5a5a"/><rect x="1133" y="340" width="2" height="2" fill="#5a5a5a"/><rect x="1133" y="344" width="2" height="2" fill="#5a5a5a"/><rect x="1133" y="348" width="2" height="2" fill="#5a5a5a"/><rect x="1133" y="352" width="2" height="2" fill="#5a5a5a"/><rect x="1133" y="356" width="2" height="2" fill="#5a5a5a"/><rect x="1133" y="360" width="2" height="2" fill="#5a5a5a"/><rect x="1133" y="364" width="2" height="2" fill="#5a5a5a"/><rect x="1133" y="368" width="2" height="2" fill="#5a5a5a"/><rect x="1133" y="372" width="2" height="2" fill="#5a5a5a"/><rect x="1133" y="376" width="2" height="2" fill="#5a5a5a"/><rect x="1133" y="380" width="2" height="2" fill="#5a5a5a"/><rect x="1133" y="384" width="2" height="2" fill="#5a5a5a"/><rect x="1133" y="388" width="2" height="2" fill="#5a5a5a"/><rect x="1133" y="392" width="2" height="2" fill="#5a5a5a"/><rect x="1133" y="396" width="2" height="2" fill="#5a5a5a"/><rect x="1133" y="400" width="2" height="2" fill="#5a5a5a"/><rect x="1133" y="404" width="2" height="2" fill="#5a5a5a"/><rect x="1133" y="408" width="2" height="2" fill="#5a5a5a"/><rect x="1133" y="412" width="2" height="2" fill="#5a5a5a"/><rect x="1133" y="416" width="2" height="2" fill="#5a5a5a"/><rect x="1133" y="420" width="2" height="2" fill="#5a5a5a"/><rect x="1133" y="424" width="2" height="2" fill="#5a5a5a"/><rect x="1133" y="428" width="2" height="2" fill="#5a5a5a"/><rect x="1133" y="432" width="2" height="2" fill="#5a5a5a"/><rect x="1133" y="436" width="2" height="2" fill="#5a5a5a"/><rect x="1213" y="426" width="2" height="2" fill="#5a5a5a"/><rect x="1217" y="426" width="2" height="2" fill="#5a5a5a"/><rect x="1221" y="426" width="2" height="2" fill="#5a5a5a"/><rect x="1225" y="426" width="2" height="2" fill="#5a5a5a"/><rect x="1229" y="426" width="2" height="2" fill="#5a5a5a"/><rect x="1233" y="426" width="2" height="2" fill="#5a5a5a"/><rect x="1237" y="426" width="2" height="2" fill="#5a5a5a"/><rect x="1241" y="426" width="2" height="2" fill="#5a5a5a"/><rect x="1245" y="426" width="2" height="2" fill="#5a5a5a"/><rect x="1249" y="426" width="2" height="2" fill="#5a5a5a"/><rect x="1253" y="426" width="2" height="2" fill="#5a5a5a"/><rect x="1257" y="426" width="2" height="2" fill="#5a5a5a"/><rect x="1261" y="426" width="2" height="2" fill="#5a5a5a"/><rect x="1265" y="426" width="2" height="2" fill="#5a5a5a"/><rect x="1269" y="426" width="2" height="2" fill="#5a5a5a"/><rect x="1273" y="426" width="2" height="2" fill="#5a5a5a"/><rect x="1277" y="426" width="2" height="2" fill="#5a5a5a"/><rect x="1281" y="426" width="2" height="2" fill="#5a5a5a"/><rect x="1285" y="426" width="2" height="2" fill="#5a5a5a"/><path d="M1264,490 l6,-3 l7,3 l-6,3 Z" fill="#eee" stroke="#333" stroke-width="0.6"/><path d="M1264,487 l6,-3 l7,3 l-6,3 Z" fill="#eee" stroke="#333" stroke-width="0.6"/><path d="M1264,484 l6,-3 l7,3 l-6,3 Z" fill="#888" stroke="#333" stroke-width="0.6"/><path d="M1265,496 v-14" stroke="#d02020" stroke-width="1.2"/><polygon points="1265,480 1263,484 1267,484" fill="#d02020"/><path d="M1290,490 l6,-3 l7,3 l-6,3 Z" fill="#888" stroke="#333" stroke-width="0.6"/><path d="M1290,487 l6,-3 l7,3 l-6,3 Z" fill="#eee" stroke="#333" stroke-width="0.6"/><path d="M1290,484 l6,-3 l7,3 l-6,3 Z" fill="#eee" stroke="#333" stroke-width="0.6"/><path d="M1290,480 v12" stroke="#d02020" stroke-width="1.2"/><polygon points="1290,495 1288,491 1292,491" fill="#d02020"/><path d="M1315,492 l9,-5 l7,3 l-9,5 Z" fill="#eee" stroke="#333" stroke-width="0.6"/><circle cx="1327" cy="483" r="3" fill="#f8a020"/><path d="M1327,478 v10 M1322,483 h10" stroke="#f86010" stroke-width="0.8"/><path d="M1339,492 l9,-5 l7,3 l-9,5 Z" fill="#eee" stroke="#333" stroke-width="0.6"/><circle cx="1344" cy="488" r="3" fill="#3a7ad0"/><circle cx="1351" cy="482" r="3" fill="#f8a020"/><path d="M1351,477 v10 M1346,482 h10" stroke="#f86010" stroke-width="0.8"/><rect x="1144.5" y="580" width="15" height="14" rx="2" fill="#555" stroke="#333" stroke-width="0.8"/><polygon points="1149,587 1153,584 1153,590" fill="#bbb"/><rect x="1160.5" y="580" width="97" height="14" rx="2" fill="#5e5e5e" stroke="#333" stroke-width="0.8"/><rect x="1201" y="583" width="1.5" height="1.5" fill="#333"/><rect x="1201" y="586" width="1.5" height="1.5" fill="#333"/><rect x="1201" y="589" width="1.5" height="1.5" fill="#333"/><rect x="1204" y="583" width="1.5" height="1.5" fill="#333"/><rect x="1204" y="586" width="1.5" height="1.5" fill="#333"/><rect x="1204" y="589" width="1.5" height="1.5" fill="#333"/><rect x="1207" y="583" width="1.5" height="1.5" fill="#333"/><rect x="1207" y="586" width="1.5" height="1.5" fill="#333"/><rect x="1207" y="589" width="1.5" height="1.5" fill="#333"/><rect x="1210" y="583" width="1.5" height="1.5" fill="#333"/><rect x="1210" y="586" width="1.5" height="1.5" fill="#333"/><rect x="1210" y="589" width="1.5" height="1.5" fill="#333"/><rect x="1213" y="583" width="1.5" height="1.5" fill="#333"/><rect x="1213" y="586" width="1.5" height="1.5" fill="#333"/><rect x="1213" y="589" width="1.5" height="1.5" fill="#333"/><rect x="1258" y="580" width="67" height="14" fill="#3a3a3a"/><rect x="1325.5" y="580" width="15" height="14" rx="2" fill="#555" stroke="#333" stroke-width="0.8"/><polygon points="1330,587 1334,584 1334,590" fill="#bbb"/><rect x="1341" y="580" width="15" height="14" rx="2" fill="#555" stroke="#333" stroke-width="0.8"/><polygon points="1350,587 1346,584 1346,590" fill="#bbb"/><rect x="40.5" y="620" width="1.5" height="15" fill="#8a8a8a"/><text x="42.0" y="616" font-family="Liberation Sans" font-size="10.5" fill="#a8a8a8">10</text><rect x="67.2" y="620" width="1.5" height="15" fill="#8a8a8a"/><text x="68.7" y="616" font-family="Liberation Sans" font-size="10.5" fill="#a8a8a8">15</text><rect x="93.8" y="620" width="1.5" height="15" fill="#8a8a8a"/><text x="95.3" y="616" font-family="Liberation Sans" font-size="10.5" fill="#a8a8a8">20</text><rect x="120.5" y="620" width="1.5" height="15" fill="#8a8a8a"/><text x="122.0" y="616" font-family="Liberation Sans" font-size="10.5" fill="#a8a8a8">25</text><rect x="147.2" y="620" width="1.5" height="15" fill="#8a8a8a"/><text x="148.7" y="616" font-family="Liberation Sans" font-size="10.5" fill="#a8a8a8">30</text><rect x="173.9" y="620" width="1.5" height="15" fill="#8a8a8a"/><text x="175.4" y="616" font-family="Liberation Sans" font-size="10.5" fill="#a8a8a8">35</text><rect x="200.6" y="620" width="1.5" height="15" fill="#8a8a8a"/><text x="202.1" y="616" font-family="Liberation Sans" font-size="10.5" fill="#a8a8a8">40</text><rect x="227.2" y="620" width="1.5" height="15" fill="#8a8a8a"/><text x="228.7" y="616" font-family="Liberation Sans" font-size="10.5" fill="#a8a8a8">45</text><rect x="253.9" y="620" width="1.5" height="15" fill="#8a8a8a"/><text x="255.4" y="616" font-family="Liberation Sans" font-size="10.5" fill="#a8a8a8">50</text><rect x="280.6" y="620" width="1.5" height="15" fill="#8a8a8a"/><text x="282.1" y="616" font-family="Liberation Sans" font-size="10.5" fill="#a8a8a8">55</text><rect x="307.2" y="620" width="1.5" height="15" fill="#8a8a8a"/><text x="308.8" y="616" font-family="Liberation Sans" font-size="10.5" fill="#a8a8a8">60</text><rect x="333.9" y="620" width="1.5" height="15" fill="#8a8a8a"/><text x="335.4" y="616" font-family="Liberation Sans" font-size="10.5" fill="#a8a8a8">65</text><rect x="360.6" y="620" width="1.5" height="15" fill="#8a8a8a"/><text x="362.1" y="616" font-family="Liberation Sans" font-size="10.5" fill="#a8a8a8">70</text><rect x="387.3" y="620" width="1.5" height="15" fill="#8a8a8a"/><text x="388.8" y="616" font-family="Liberation Sans" font-size="10.5" fill="#a8a8a8">75</text><rect x="413.9" y="620" width="1.5" height="15" fill="#8a8a8a"/><text x="415.4" y="616" font-family="Liberation Sans" font-size="10.5" fill="#a8a8a8">80</text><rect x="440.6" y="620" width="1.5" height="15" fill="#8a8a8a"/><text x="442.1" y="616" font-family="Liberation Sans" font-size="10.5" fill="#a8a8a8">85</text><rect x="467.3" y="620" width="1.5" height="15" fill="#8a8a8a"/><text x="468.8" y="616" font-family="Liberation Sans" font-size="10.5" fill="#a8a8a8">90</text><rect x="494.0" y="620" width="1.5" height="15" fill="#8a8a8a"/><text x="495.5" y="616" font-family="Liberation Sans" font-size="10.5" fill="#a8a8a8">95</text><rect x="520.6" y="620" width="1.5" height="15" fill="#8a8a8a"/><text x="522.1" y="616" font-family="Liberation Sans" font-size="10.5" fill="#a8a8a8">100</text><rect x="547.3" y="620" width="1.5" height="15" fill="#8a8a8a"/><text x="548.8" y="616" font-family="Liberation Sans" font-size="10.5" fill="#a8a8a8">105</text><rect x="574.0" y="620" width="1.5" height="15" fill="#8a8a8a"/><text x="575.5" y="616" font-family="Liberation Sans" font-size="10.5" fill="#a8a8a8">110</text><rect x="600.7" y="620" width="1.5" height="15" fill="#8a8a8a"/><text x="602.2" y="616" font-family="Liberation Sans" font-size="10.5" fill="#a8a8a8">115</text><rect x="627.4" y="620" width="1.5" height="15" fill="#8a8a8a"/><text x="628.9" y="616" font-family="Liberation Sans" font-size="10.5" fill="#a8a8a8">120</text><rect x="654.0" y="620" width="1.5" height="15" fill="#8a8a8a"/><text x="655.5" y="616" font-family="Liberation Sans" font-size="10.5" fill="#a8a8a8">125</text><rect x="680.7" y="620" width="1.5" height="15" fill="#8a8a8a"/><text x="682.2" y="616" font-family="Liberation Sans" font-size="10.5" fill="#a8a8a8">130</text><rect x="707.4" y="620" width="1.5" height="15" fill="#8a8a8a"/><text x="708.9" y="616" font-family="Liberation Sans" font-size="10.5" fill="#a8a8a8">135</text><rect x="734.0" y="620" width="1.5" height="15" fill="#8a8a8a"/><text x="735.5" y="616" font-family="Liberation Sans" font-size="10.5" fill="#a8a8a8">140</text><rect x="760.7" y="620" width="1.5" height="15" fill="#8a8a8a"/><text x="762.2" y="616" font-family="Liberation Sans" font-size="10.5" fill="#a8a8a8">145</text><rect x="787.4" y="620" width="1.5" height="15" fill="#8a8a8a"/><text x="788.9" y="616" font-family="Liberation Sans" font-size="10.5" fill="#a8a8a8">150</text><rect x="814.1" y="620" width="1.5" height="15" fill="#8a8a8a"/><text x="815.6" y="616" font-family="Liberation Sans" font-size="10.5" fill="#a8a8a8">155</text><rect x="840.8" y="620" width="1.5" height="15" fill="#8a8a8a"/><text x="842.2" y="616" font-family="Liberation Sans" font-size="10.5" fill="#a8a8a8">160</text><rect x="867.4" y="620" width="1.5" height="15" fill="#8a8a8a"/><text x="868.9" y="616" font-family="Liberation Sans" font-size="10.5" fill="#a8a8a8">165</text><rect x="894.1" y="620" width="1.5" height="15" fill="#8a8a8a"/><text x="895.6" y="616" font-family="Liberation Sans" font-size="10.5" fill="#a8a8a8">170</text><rect x="920.8" y="620" width="1.5" height="15" fill="#8a8a8a"/><text x="922.3" y="616" font-family="Liberation Sans" font-size="10.5" fill="#a8a8a8">175</text><rect x="947.5" y="620" width="1.5" height="15" fill="#8a8a8a"/><text x="949.0" y="616" font-family="Liberation Sans" font-size="10.5" fill="#a8a8a8">180</text><rect x="974.1" y="620" width="1.5" height="15" fill="#8a8a8a"/><text x="975.6" y="616" font-family="Liberation Sans" font-size="10.5" fill="#a8a8a8">185</text><rect x="1000.8" y="620" width="1.5" height="15" fill="#8a8a8a"/><text x="1002.3" y="616" font-family="Liberation Sans" font-size="10.5" fill="#a8a8a8">190</text><rect x="1027.5" y="620" width="1.5" height="15" fill="#8a8a8a"/><text x="1029.0" y="616" font-family="Liberation Sans" font-size="10.5" fill="#a8a8a8">195</text><rect x="1054.2" y="620" width="1.5" height="15" fill="#8a8a8a"/><text x="1055.7" y="616" font-family="Liberation Sans" font-size="10.5" fill="#a8a8a8" clip-path="url(#tsclip)">200</text><clipPath id="tsclip"><rect x="0" y="600" width="1064" height="40"/></clipPath><path transform="translate(1146,616)" d="M0,0 h3 v13 h-3 Z M4,6.5 l7,-6 v12 Z M9,6.5 l7,-6 v12 Z" fill="url(#pb)" stroke="#222" stroke-width="0.8"/><path transform="translate(1173,616)" d="M0,0 h3 v13 h-3 Z M4,6.5 l11,-6.5 v13 Z" fill="url(#pb)" stroke="#222" stroke-width="0.8"/><path transform="translate(1201,616)" d="M0,0 h3 v13 h-3 Z M4,6.5 l11,-6.5 v13 Z" fill="url(#pb)" stroke="#222" stroke-width="0.8"/><line x1="1203.5" y1="613" x2="1203.5" y2="632" stroke="#d02020" stroke-width="1"/><path transform="translate(1230,616)" d="M0,6.5 l13,-7 v14 Z" fill="url(#pb)" stroke="#222" stroke-width="0.8"/><path transform="translate(1258,616)" d="M0,-0.5 l13,7 l-13,7 Z" fill="url(#pb)" stroke="#222" stroke-width="0.8"/><path transform="translate(1285,616)" d="M0,0 l11,6.5 l-11,6.5 Z M12,0 h3 v13 h-3 Z" fill="url(#pb)" stroke="#222" stroke-width="0.8"/><line x1="1298.5" y1="613" x2="1298.5" y2="632" stroke="#d02020" stroke-width="1"/><path transform="translate(1313,616)" d="M0,0 l11,6.5 l-11,6.5 Z M12,0 h3 v13 h-3 Z" fill="url(#pb)" stroke="#222" stroke-width="0.8"/><path transform="translate(1340,616)" d="M0,0.5 l7,6 l-7,6 Z M6,0.5 l7,6 l-7,6 Z M13,0 h3 v13 h-3 Z" fill="url(#pb)" stroke="#222" stroke-width="0.8"/><rect x="184.5" y="650.5" width="10" height="11" fill="none" stroke="#555" stroke-width="1"/><path d="M185,662 h10 v-12" stroke="#222" stroke-width="1.2" fill="none"/><rect x="911.5" y="650.5" width="9" height="11" fill="none" stroke="#555" stroke-width="1"/><path d="M912,662 h9 v-12" stroke="#222" stroke-width="1.2" fill="none"/><polygon points="1078,651 1089,651 1083.5,656.5" fill="#6a6a6a" stroke="#2a2a2a" stroke-width="0.8"/><polygon points="1201,651 1212,651 1206.5,656.5" fill="#6a6a6a" stroke="#2a2a2a" stroke-width="0.8"/><circle cx="1327" cy="655" r="3" fill="none" stroke="#ddd" stroke-width="1.3"/><path d="M1330,655 h10 M1336,655 v2 M1338.5,655 v2" stroke="#ddd" stroke-width="1.3"/><rect x="1347" y="648" width="13.5" height="13.5" fill="#eee" stroke="#555" stroke-width="0.6"/><rect x="1347" y="648" width="13.5" height="2.5" fill="#4a9ae0"/><path d="M1349,659 l9,-7 M1350,653 l6,6 M1352,657 h5" stroke="#c02020" stroke-width="1"/><rect x="1347" y="678" width="14" height="14" fill="#eee" stroke="#333" stroke-width="0.8"/><rect x="1347" y="678" width="14" height="3" fill="#4a9ae0"/><rect x="1349" y="683" width="10" height="3" fill="none" stroke="#333" stroke-width="0.8"/><rect x="1349" y="687" width="10" height="3" fill="none" stroke="#333" stroke-width="0.8"/><rect x="5" y="608" width="2" height="2" fill="#5e5e5e"/><rect x="8" y="610" width="2" height="2" fill="#5e5e5e"/><rect x="5" y="613" width="2" height="2" fill="#5e5e5e"/><rect x="8" y="615" width="2" height="2" fill="#5e5e5e"/><rect x="5" y="618" width="2" height="2" fill="#5e5e5e"/><rect x="8" y="620" width="2" height="2" fill="#5e5e5e"/><rect x="5" y="623" width="2" height="2" fill="#5e5e5e"/><rect x="8" y="625" width="2" height="2" fill="#5e5e5e"/><rect x="5" y="628" width="2" height="2" fill="#5e5e5e"/><rect x="8" y="630" width="2" height="2" fill="#5e5e5e"/><rect x="5" y="633" width="2" height="2" fill="#5e5e5e"/><rect x="8" y="635" width="2" height="2" fill="#5e5e5e"/><rect x="5" y="645" width="2" height="2" fill="#5e5e5e"/><rect x="8" y="647" width="2" height="2" fill="#5e5e5e"/><rect x="5" y="650" width="2" height="2" fill="#5e5e5e"/><rect x="8" y="652" width="2" height="2" fill="#5e5e5e"/><rect x="5" y="655" width="2" height="2" fill="#5e5e5e"/><rect x="8" y="657" width="2" height="2" fill="#5e5e5e"/><rect x="5" y="660" width="2" height="2" fill="#5e5e5e"/><rect x="8" y="662" width="2" height="2" fill="#5e5e5e"/><rect x="5" y="674" width="2" height="2" fill="#5e5e5e"/><rect x="8" y="676" width="2" height="2" fill="#5e5e5e"/><rect x="5" y="679" width="2" height="2" fill="#5e5e5e"/><rect x="8" y="681" width="2" height="2" fill="#5e5e5e"/><rect x="5" y="684" width="2" height="2" fill="#5e5e5e"/><rect x="8" y="686" width="2" height="2" fill="#5e5e5e"/><rect x="5" y="689" width="2" height="2" fill="#5e5e5e"/><rect x="8" y="691" width="2" height="2" fill="#5e5e5e"/><rect x="5" y="704" width="2" height="2" fill="#5e5e5e"/><rect x="8" y="706" width="2" height="2" fill="#5e5e5e"/><rect x="5" y="709" width="2" height="2" fill="#5e5e5e"/><rect x="8" y="711" width="2" height="2" fill="#5e5e5e"/><rect x="5" y="714" width="2" height="2" fill="#5e5e5e"/><rect x="8" y="716" width="2" height="2" fill="#5e5e5e"/><rect x="5" y="719" width="2" height="2" fill="#5e5e5e"/><rect x="8" y="721" width="2" height="2" fill="#5e5e5e"/><rect x="5" y="45" width="2" height="2" fill="#5e5e5e"/><rect x="8" y="47" width="2" height="2" fill="#5e5e5e"/><rect x="5" y="50" width="2" height="2" fill="#5e5e5e"/><rect x="8" y="52" width="2" height="2" fill="#5e5e5e"/><rect x="5" y="55" width="2" height="2" fill="#5e5e5e"/><rect x="8" y="57" width="2" height="2" fill="#5e5e5e"/><rect x="5" y="60" width="2" height="2" fill="#5e5e5e"/><rect x="8" y="62" width="2" height="2" fill="#5e5e5e"/><rect x="5" y="65" width="2" height="2" fill="#5e5e5e"/><rect x="8" y="67" width="2" height="2" fill="#5e5e5e"/><rect x="5" y="78" width="2" height="2" fill="#5e5e5e"/><rect x="8" y="80" width="2" height="2" fill="#5e5e5e"/><rect x="5" y="83" width="2" height="2" fill="#5e5e5e"/><rect x="8" y="85" width="2" height="2" fill="#5e5e5e"/><rect x="5" y="88" width="2" height="2" fill="#5e5e5e"/><rect x="8" y="90" width="2" height="2" fill="#5e5e5e"/><rect x="5" y="93" width="2" height="2" fill="#5e5e5e"/><rect x="8" y="95" width="2" height="2" fill="#5e5e5e"/><rect x="5" y="98" width="2" height="2" fill="#5e5e5e"/><rect x="8" y="100" width="2" height="2" fill="#5e5e5e"/><rect x="5" y="103" width="2" height="2" fill="#5e5e5e"/><rect x="8" y="105" width="2" height="2" fill="#5e5e5e"/><rect x="5" y="108" width="2" height="2" fill="#5e5e5e"/><rect x="8" y="110" width="2" height="2" fill="#5e5e5e"/><rect x="5" y="113" width="2" height="2" fill="#5e5e5e"/><rect x="8" y="115" width="2" height="2" fill="#5e5e5e"/><rect x="5" y="118" width="2" height="2" fill="#5e5e5e"/><rect x="8" y="120" width="2" height="2" fill="#5e5e5e"/><rect x="5" y="123" width="2" height="2" fill="#5e5e5e"/><rect x="8" y="125" width="2" height="2" fill="#5e5e5e"/><rect x="5" y="128" width="2" height="2" fill="#5e5e5e"/><rect x="8" y="130" width="2" height="2" fill="#5e5e5e"/><rect x="5" y="133" width="2" height="2" fill="#5e5e5e"/><rect x="8" y="135" width="2" height="2" fill="#5e5e5e"/><rect x="5" y="138" width="2" height="2" fill="#5e5e5e"/><rect x="8" y="140" width="2" height="2" fill="#5e5e5e"/><rect x="6" y="155" width="2" height="2" fill="#5e5e5e"/><rect x="8" y="153" width="2" height="2" fill="#5e5e5e"/><rect x="11" y="155" width="2" height="2" fill="#5e5e5e"/><rect x="13" y="153" width="2" height="2" fill="#5e5e5e"/><rect x="16" y="155" width="2" height="2" fill="#5e5e5e"/><rect x="18" y="153" width="2" height="2" fill="#5e5e5e"/><rect x="21" y="155" width="2" height="2" fill="#5e5e5e"/><rect x="23" y="153" width="2" height="2" fill="#5e5e5e"/><rect x="26" y="155" width="2" height="2" fill="#5e5e5e"/><rect x="28" y="153" width="2" height="2" fill="#5e5e5e"/><rect x="31" y="155" width="2" height="2" fill="#5e5e5e"/><rect x="33" y="153" width="2" height="2" fill="#5e5e5e"/><rect x="36" y="155" width="2" height="2" fill="#5e5e5e"/><rect x="38" y="153" width="2" height="2" fill="#5e5e5e"/><defs><linearGradient id="tbb" x1="0" x2="0" y1="0" y2="1"><stop offset="0" stop-color="#fff" stop-opacity="0.22"/><stop offset="0.5" stop-color="#fff" stop-opacity="0.1"/><stop offset="1" stop-color="#fff" stop-opacity="0.04"/></linearGradient><linearGradient id="tba" x1="0" x2="0" y1="0" y2="1"><stop offset="0" stop-color="#fff" stop-opacity="0.5"/><stop offset="0.5" stop-color="#fff" stop-opacity="0.3"/><stop offset="1" stop-color="#fff" stop-opacity="0.2"/></linearGradient></defs><rect x="184.5" y="729.5" width="57" height="37" rx="3" fill="url(#tbb)" stroke="rgba(255,255,255,0.3)" stroke-width="1"/><rect x="246.5" y="729.5" width="57" height="37" rx="3" fill="url(#tbb)" stroke="rgba(255,255,255,0.3)" stroke-width="1"/><rect x="308.5" y="729.5" width="52" height="37" rx="3" fill="url(#tba)" stroke="rgba(255,255,255,0.3)" stroke-width="1"/><rect x="370.5" y="729.5" width="57" height="37" rx="3" fill="url(#tbb)" stroke="rgba(255,255,255,0.3)" stroke-width="1"/><rect x="433.5" y="729.5" width="56" height="37" rx="3" fill="url(#tbb)" stroke="rgba(255,255,255,0.3)" stroke-width="1"/><rect x="362" y="730" width="3" height="36" fill="rgba(255,255,255,0.25)"/><defs><radialGradient id="orb" cx="0.5" cy="0.62" r="0.6"><stop offset="0" stop-color="#2aa8e0"/><stop offset="0.55" stop-color="#1a5a98"/><stop offset="0.9" stop-color="#0e2e58"/><stop offset="1" stop-color="#3a6a98"/></radialGradient><linearGradient id="orbh" x1="0" x2="0" y1="0" y2="1"><stop offset="0" stop-color="#fff" stop-opacity="0.55"/><stop offset="1" stop-color="#fff" stop-opacity="0.05"/></linearGradient></defs><circle cx="27" cy="748" r="18.3" fill="url(#orb)" stroke="#0a1a2e" stroke-width="0.8"/><ellipse cx="27" cy="738" rx="14" ry="8" fill="url(#orbh)"/><ellipse cx="27" cy="762" rx="8" ry="2.5" fill="#40e0ff" opacity="0.3"/><path d="M18,739 Q22,736 27,738 L26,746 Q21,744 17,746 Z" fill="#f05a28"/><path d="M28,738 Q33,740 38,738 L36,746 Q31,748 27,746 Z" fill="#7ac03a"/><path d="M17,747 Q21,745 26,747 L25,755 Q20,753 15,755 Z" fill="#2a9ae8"/><path d="M27,747 Q32,749 36,747 L35,756 Q30,757 26,755 Z" fill="#f8c828"/><path d="M74,735 L86,735 L88,737 L104,737 L104,762 L74,762 Z" fill="#e8cc78" stroke="#a08030" stroke-width="0.8"/><rect x="78" y="735" width="10" height="4" fill="#fff"/><rect x="79" y="736" width="3" height="2" fill="#1a1"/><rect x="86" y="738" width="10" height="4" fill="#fff"/><rect x="87" y="739" width="3" height="2" fill="#d22"/><rect x="93" y="740" width="10" height="4" fill="#fff"/><rect x="94" y="741" width="3" height="2" fill="#28e"/><path d="M74,743 L104,743 L104,762 L74,762 Z" fill="#f6e6a8"/><path d="M77,751 L101,751 L101,763 L96,763 L96,756 L82,756 L82,763 L77,763 Z" fill="#7ac8f0" stroke="#2a78b0" stroke-width="0.8"/><path d="M138,737 Q140,732 150,732 L162,732 L162,760 L138,760 Z" fill="#2a5ab0"/><path d="M144,737 L166,735 L165,762 L145,760 Z" fill="#f4f6fa" stroke="#8aa0c8" stroke-width="0.8"/><text x="146" y="751" font-family="Liberation Serif" font-size="12" font-weight="bold" font-style="italic" fill="#2a4aa0">W</text><path d="M156,742 h7 M157,746 h6 M148,751 h15 M148,754 h15" stroke="#2a4aa0" stroke-width="1.4"/><circle cx="213" cy="748" r="14" fill="#db4437"/><path d="M213,748 L225,741 A14,14 0 0 1 207,761 Z" fill="#f4c20d"/><path d="M213,748 L207,761 A14,14 0 0 1 201,741 Z" fill="#0f9d58"/><circle cx="213" cy="748" r="6.5" fill="#fff"/><circle cx="213" cy="748" r="5" fill="#4285f4"/><rect x="262" y="735" width="26" height="28" rx="2" fill="#f4f4f4" stroke="#c05030" stroke-width="1"/><path d="M259,738 L276,735 L276,761 L259,758 Z" fill="#d24726"/><rect x="268" y="741" width="18" height="15" fill="#fff" stroke="#d24726" stroke-width="1"/><circle cx="280" cy="748" r="4" fill="#d24726"/><path d="M270,745 h5 M270,748 h5 M270,751 h5" stroke="#d24726" stroke-width="1.2"/><rect x="318" y="732" width="33" height="32" fill="#e4f2f2"/><path d="M322,755 L322,742 L334.5,735 L347,742 L347,755 L342,755 L342,746 L334.5,751 L327,746 L327,755 Z" fill="#2ab8c0"/><path d="M334.5,735 L334.5,751 L342,746 L347,742 Z" fill="#157f88"/><path d="M322,742 L334.5,735 L327,746 Z" fill="#5ad8dc"/><rect x="318" y="756" width="33" height="8" fill="#bfe6e6"/><text x="333" y="763.5" font-family="Liberation Mono" font-size="7" font-weight="bold" fill="#222">MAYA</text><circle cx="398" cy="748" r="14" fill="#00878f"/><circle cx="391" cy="748" r="5" fill="none" stroke="#cfe" stroke-width="2.3"/><circle cx="405" cy="748" r="5" fill="none" stroke="#cfe" stroke-width="2.3"/><path d="M389,748 h4 M403,748 h4 M405,746 v4" stroke="#cfe" stroke-width="1.5"/><circle cx="461" cy="748" r="13.5" fill="#e8641a"/><circle cx="464" cy="746" r="8" fill="#3a6ad0"/><path d="M449,740 Q456,733 466,735 Q458,738 460,744 Q452,746 454,755 Q447,750 449,740 Z" fill="#f8a020"/><path d="M470,744 Q470,756 460,758 Q468,752 466,746 Z" fill="#f07020"/><polygon points="1188,752 1192,747 1196,752" fill="#eee"/><rect x="1211" y="742" width="8" height="12" rx="1" fill="none" stroke="#eee" stroke-width="1.3"/><path d="M1216,745 h5 v5 h-5 Z M1217,742 v3 M1220,742 v3 M1218.5,750 v5" stroke="#eee" stroke-width="1.2" fill="#eee"/><rect x="1234" y="752" width="2" height="2" fill="#eee"/><rect x="1237" y="749" width="2" height="5" fill="#eee"/><rect x="1240" y="746" width="2" height="8" fill="#eee"/><rect x="1243" y="743" width="2" height="11" fill="#eee"/><rect x="1246" y="744" width="2" height="10" fill="#eee" opacity="0.9"/><path d="M1258,745 h3 l4,-4 v14 l-4,-4 h-3 Z" fill="#eee"/><path d="M1267,745 q2,3 0,6 M1269,743 q4,5 0,10" fill="none" stroke="#eee" stroke-width="1"/><text x="1315" y="745" text-anchor="middle" font-family="Liberation Sans" font-size="12" fill="#fff">2:21 AM</text><text x="1315" y="762" text-anchor="middle" font-family="Liberation Sans" font-size="12" fill="#fff">11/13/2014</text><rect x="1352" y="729" width="14" height="39" fill="rgba(255,255,255,0.1)" stroke="rgba(255,255,255,0.3)" stroke-width="1"/></svg>
</body></html>
